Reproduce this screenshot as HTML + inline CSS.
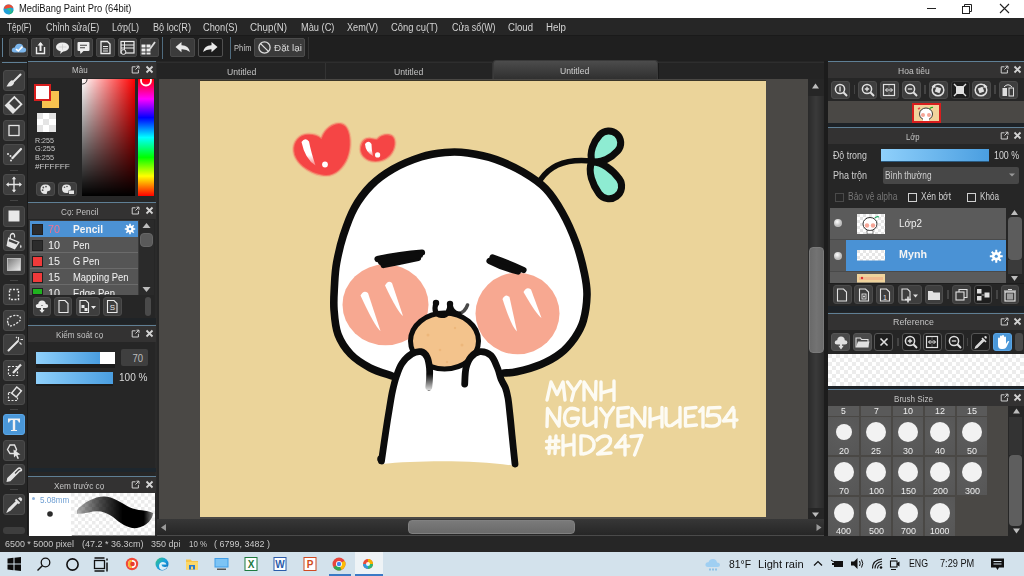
<!DOCTYPE html>
<html><head><meta charset="utf-8"><title>MediBang Paint Pro</title>
<style>
html,body{margin:0;padding:0;width:1024px;height:576px;overflow:hidden;background:#262626;}
body{position:relative;font-family:"Liberation Sans",sans-serif;}
body>div,body>svg{position:absolute;box-sizing:border-box;}
.t{white-space:pre;transform-origin:0 0;}

</style></head><body>
<div style="left:0px;top:0px;width:1024px;height:18px;background:#fff"></div>
<svg style="left:3px;top:4px;" width="11" height="11" viewBox="0 0 11 11"><circle cx="5.5" cy="5.5" r="5" fill="#1f9fd8"/><path d="M0.8 4.5 Q2 0.5 5.5 0.5 Q9.5 0.5 10.5 4.5 Q8 3 5.5 4 Q3 5 0.8 4.5Z" fill="#ef4a32"/><path d="M5.5 10.5 Q10 10 10.5 5.5 Q8.5 8.5 5.5 10.5Z" fill="#21b46a"/><path d="M3.5 5.5 Q5.5 3.5 8 5 Q9 7.5 6.5 9.5 Q9 6.5 3.5 5.5Z" fill="#36c47c"/></svg>
<div class="t" style="left:18.8px;top:4.23px;font-family:'Liberation Sans',sans-serif;font-size:10px;line-height:10px;color:#141414;font-weight:400;transform:scaleX(0.9369);">MediBang Paint Pro (64bit)</div>
<div style="left:927px;top:8px;width:9px;height:1px;background:#222"></div>
<svg style="left:961px;top:3px;" width="12" height="11" viewBox="0 0 12 11"><rect x="1.5" y="3.5" width="7" height="7" fill="none" stroke="#222"/><path d="M3.5 3.5V1.5H10.5V8.5H8.5" fill="none" stroke="#222"/></svg>
<svg style="left:999px;top:3px;" width="11" height="11" viewBox="0 0 11 11"><path d="M1 1L10 10M10 1L1 10" stroke="#222" stroke-width="1.1"/></svg>
<div style="left:0px;top:18px;width:1024px;height:17px;background:#262626"></div>
<div class="t" style="left:7.3px;top:22.54px;font-family:'Liberation Sans',sans-serif;font-size:10px;line-height:10px;color:#d4d4d4;font-weight:400;transform:scaleX(0.8200);">Tệp(F)</div>
<div class="t" style="left:45.7px;top:22.54px;font-family:'Liberation Sans',sans-serif;font-size:10px;line-height:10px;color:#d4d4d4;font-weight:400;transform:scaleX(0.8958);">Chỉnh sửa(E)</div>
<div class="t" style="left:112px;top:22.54px;font-family:'Liberation Sans',sans-serif;font-size:10px;line-height:10px;color:#d4d4d4;font-weight:400;transform:scaleX(0.9028);">Lớp(L)</div>
<div class="t" style="left:152.5px;top:22.54px;font-family:'Liberation Sans',sans-serif;font-size:10px;line-height:10px;color:#d4d4d4;font-weight:400;transform:scaleX(0.9115);">Bộ lọc(R)</div>
<div class="t" style="left:203px;top:22.54px;font-family:'Liberation Sans',sans-serif;font-size:10px;line-height:10px;color:#d4d4d4;font-weight:400;transform:scaleX(0.9262);">Chọn(S)</div>
<div class="t" style="left:250px;top:22.54px;font-family:'Liberation Sans',sans-serif;font-size:10px;line-height:10px;color:#d4d4d4;font-weight:400;transform:scaleX(0.9789);">Chụp(N)</div>
<div class="t" style="left:300.6px;top:22.54px;font-family:'Liberation Sans',sans-serif;font-size:10px;line-height:10px;color:#d4d4d4;font-weight:400;transform:scaleX(0.9246);">Màu (C)</div>
<div class="t" style="left:347px;top:22.54px;font-family:'Liberation Sans',sans-serif;font-size:10px;line-height:10px;color:#d4d4d4;font-weight:400;transform:scaleX(0.9143);">Xem(V)</div>
<div class="t" style="left:391px;top:22.54px;font-family:'Liberation Sans',sans-serif;font-size:10px;line-height:10px;color:#d4d4d4;font-weight:400;transform:scaleX(0.9397);">Công cụ(T)</div>
<div class="t" style="left:451.5px;top:22.54px;font-family:'Liberation Sans',sans-serif;font-size:10px;line-height:10px;color:#d4d4d4;font-weight:400;transform:scaleX(0.8892);">Cửa sổ(W)</div>
<div class="t" style="left:508px;top:22.54px;font-family:'Liberation Sans',sans-serif;font-size:10px;line-height:10px;color:#d4d4d4;font-weight:400;transform:scaleX(0.9564);">Cloud</div>
<div class="t" style="left:546px;top:22.54px;font-family:'Liberation Sans',sans-serif;font-size:10px;line-height:10px;color:#d4d4d4;font-weight:400;transform:scaleX(0.9719);">Help</div>
<div style="left:0px;top:35px;width:1024px;height:1px;background:#1a1a1a"></div>
<div style="left:0px;top:36px;width:1024px;height:25px;background:#1f1f1f"></div>
<div style="left:2px;top:38px;width:1px;height:19px;background:#5f7f95"></div>
<div style="left:9px;top:38px;width:19px;height:19px;background:#3b3b3b;border:1px solid #484848;border-radius:2px;"></div>
<div style="left:31px;top:38px;width:19px;height:19px;background:#3b3b3b;border:1px solid #484848;border-radius:2px;"></div>
<div style="left:53px;top:38px;width:19px;height:19px;background:#3b3b3b;border:1px solid #484848;border-radius:2px;"></div>
<div style="left:74px;top:38px;width:19px;height:19px;background:#3b3b3b;border:1px solid #484848;border-radius:2px;"></div>
<div style="left:96px;top:38px;width:19px;height:19px;background:#3b3b3b;border:1px solid #484848;border-radius:2px;"></div>
<div style="left:118px;top:38px;width:19px;height:19px;background:#3b3b3b;border:1px solid #484848;border-radius:2px;"></div>
<div style="left:140px;top:38px;width:19px;height:19px;background:#3b3b3b;border:1px solid #484848;border-radius:2px;"></div>
<svg style="left:10px;top:39px;" width="18" height="17" viewBox="0 0 18 17"><path d="M4.5 13.5 Q1.5 13.5 1.8 10.8 Q2.2 8.4 4.8 8.6 Q5.6 4.6 9.4 4.8 Q13 5 13.4 8.4 Q16.4 8.6 16.2 11.2 Q16 13.5 13.4 13.5Z" fill="#7cb6ec"/><path d="M6 10.2 L8.3 12 L12.4 7.6" fill="none" stroke="#fff" stroke-width="1.6"/></svg>
<svg style="left:31px;top:39px;" width="19" height="17" viewBox="0 0 19 17"><path d="M5.5 8 V14.5 H13.5 V8" fill="none" stroke="#eee" stroke-width="1.4"/><path d="M9.5 12 V4" stroke="#eee" stroke-width="2"/><path d="M6.5 6.5 L9.5 3 L12.5 6.5Z" fill="#eee"/></svg>
<svg style="left:53px;top:39px;" width="19" height="17" viewBox="0 0 19 17"><ellipse cx="9.5" cy="8" rx="6.5" ry="4.6" fill="#eee"/><path d="M8 11.5 L7 15 L11 11.8Z" fill="#eee"/><path d="M5.5 8h8M9.5 5.2v5.5" stroke="#bbb" stroke-width=".5"/></svg>
<svg style="left:74px;top:39px;" width="19" height="17" viewBox="0 0 19 17"><rect x="3.5" y="3" width="12" height="9" rx="1" fill="#eee"/><path d="M6 12 L6.5 15 L9.5 12Z" fill="#eee"/><path d="M6 6.3h7M6 8.8h5" stroke="#444" stroke-width="1.1"/></svg>
<svg style="left:96px;top:39px;" width="19" height="17" viewBox="0 0 19 17"><path d="M5 2.5 H11.5 L14 5 V14.5 H5Z" fill="none" stroke="#eee" stroke-width="1.3"/><path d="M7 7.5h5M7 9.8h5M7 12h5" stroke="#eee" stroke-width="1"/></svg>
<svg style="left:118px;top:39px;" width="19" height="17" viewBox="0 0 19 17"><rect x="3" y="2.5" width="13" height="11.5" fill="none" stroke="#eee" stroke-width="1.2"/><path d="M3 6h13M3 9h13M6.5 2.5v11.5" stroke="#eee" stroke-width="1"/><circle cx="5.5" cy="13" r="2.4" fill="#3b3b3b" stroke="#eee" stroke-width="1"/></svg>
<svg style="left:139px;top:39px;" width="19" height="17" viewBox="0 0 19 17"><path d="M2.5 5.5h4v3h-4zM7.5 5.5h4v3h-4zM2.5 9.5h4v3h-4zM7.5 9.5h4v3h-4zM2.5 13.5h4v2h-4zM7.5 13.5h4v2h-4z" fill="#eee"/><path d="M11 10 L16 3" stroke="#ddd" stroke-width="1.8"/></svg>
<div style="left:162px;top:37px;width:1px;height:22px;background:#4f6b7e"></div>
<div style="left:170px;top:38px;width:25px;height:19px;background:#3b3b3b;border:1px solid #484848;border-radius:2px;"></div>
<div style="left:198px;top:38px;width:25px;height:19px;background:#1c1c1c;border:1px solid #505050;border-radius:2px;"></div>
<svg style="left:170px;top:38px;" width="25" height="19" viewBox="0 0 25 19"><path d="M5.5 9 L11.5 4 V7.2 Q18.5 7 20 14 Q16.5 11 11.5 11.2 V14.2Z" fill="#e8e8e8"/></svg>
<svg style="left:198px;top:38px;" width="25" height="19" viewBox="0 0 25 19"><path d="M19.5 9 L13.5 4 V7.2 Q6.5 7 5 14 Q8.5 11 13.5 11.2 V14.2Z" fill="#e8e8e8"/></svg>
<div style="left:230px;top:37px;width:1px;height:22px;background:#4f6b7e"></div>
<div style="left:307.5px;top:37px;width:1px;height:22px;background:#333"></div>
<div class="t" style="left:234px;top:43.80px;font-family:'Liberation Sans',sans-serif;font-size:8.5px;line-height:8.5px;color:#c8c8c8;font-weight:400;transform:scaleX(0.8819);">Phím</div>
<div style="left:254px;top:38px;width:51px;height:19px;background:#3b3b3b;border:1px solid #4c4c4c;border-radius:2px;"></div>
<svg style="left:257px;top:40px;" width="15" height="15" viewBox="0 0 15 15"><circle cx="7.5" cy="7.5" r="5.6" fill="none" stroke="#ddd" stroke-width="1.3"/><path d="M3.6 3.6 L11.4 11.4" stroke="#ddd" stroke-width="1.3"/></svg>
<div class="t" style="left:273.5px;top:43.16px;font-family:'Liberation Sans',sans-serif;font-size:9.5px;line-height:9.5px;color:#d8d8d8;font-weight:400;transform:scaleX(1.0394);">Đặt lại</div>
<div style="left:0px;top:61px;width:28px;height:490px;background:#262626"></div>
<div style="left:27px;top:61px;width:1px;height:474px;background:#1a1a1a"></div>
<div style="left:2px;top:62px;width:25px;height:1px;background:#5f7f95"></div>
<div style="left:3px;top:70px;width:22px;height:21px;background:#3e3e3e;border:1px solid #4b4b4b;border-radius:3px"></div>
<div style="left:3px;top:94px;width:22px;height:21px;background:#3e3e3e;border:1px solid #4b4b4b;border-radius:3px"></div>
<div style="left:3px;top:120px;width:22px;height:21px;background:#3e3e3e;border:1px solid #4b4b4b;border-radius:3px"></div>
<div style="left:3px;top:144px;width:22px;height:21px;background:#3e3e3e;border:1px solid #4b4b4b;border-radius:3px"></div>
<div style="left:3px;top:174px;width:22px;height:21px;background:#3e3e3e;border:1px solid #4b4b4b;border-radius:3px"></div>
<div style="left:3px;top:206px;width:22px;height:21px;background:#3e3e3e;border:1px solid #4b4b4b;border-radius:3px"></div>
<div style="left:3px;top:230px;width:22px;height:21px;background:#3e3e3e;border:1px solid #4b4b4b;border-radius:3px"></div>
<div style="left:3px;top:254px;width:22px;height:21px;background:#3e3e3e;border:1px solid #4b4b4b;border-radius:3px"></div>
<div style="left:3px;top:284px;width:22px;height:21px;background:#3e3e3e;border:1px solid #4b4b4b;border-radius:3px"></div>
<div style="left:3px;top:310px;width:22px;height:21px;background:#3e3e3e;border:1px solid #4b4b4b;border-radius:3px"></div>
<div style="left:3px;top:334px;width:22px;height:21px;background:#3e3e3e;border:1px solid #4b4b4b;border-radius:3px"></div>
<div style="left:3px;top:360px;width:22px;height:21px;background:#3e3e3e;border:1px solid #4b4b4b;border-radius:3px"></div>
<div style="left:3px;top:384px;width:22px;height:21px;background:#3e3e3e;border:1px solid #4b4b4b;border-radius:3px"></div>
<div style="left:3px;top:414px;width:22px;height:21px;background:#4a97d8;border:1px solid #5aa5e5;border-radius:3px"></div>
<div style="left:3px;top:440px;width:22px;height:21px;background:#3e3e3e;border:1px solid #4b4b4b;border-radius:3px"></div>
<div style="left:3px;top:464px;width:22px;height:21px;background:#3e3e3e;border:1px solid #4b4b4b;border-radius:3px"></div>
<div style="left:3px;top:494px;width:22px;height:21px;background:#3e3e3e;border:1px solid #4b4b4b;border-radius:3px"></div>
<div style="left:10px;top:170px;width:8px;height:1px;background:#444"></div>
<div style="left:10px;top:200px;width:8px;height:1px;background:#444"></div>
<div style="left:10px;top:280px;width:8px;height:1px;background:#444"></div>
<div style="left:10px;top:409px;width:8px;height:1px;background:#444"></div>
<div style="left:10px;top:489px;width:8px;height:1px;background:#444"></div>
<div style="left:3px;top:527px;width:22px;height:7px;background:#3e3e3e;border-radius:3px"></div>
<svg style="left:3px;top:70px;" width="22" height="21" viewBox="0 0 22 21"><path d="M17.5 4.5 L10 12" stroke="#e4e4e4" stroke-width="2" stroke-linecap="round"/><path d="M10.5 11.2 Q9 9.5 7.5 11 Q5 13 3.5 16.5 Q8 17 10 15 Q12 13 10.5 11.2Z" fill="#e4e4e4"/></svg>
<svg style="left:3px;top:94px;" width="22" height="21" viewBox="0 0 22 21"><g transform="rotate(45 11 10.5)"><rect x="6" y="5" width="10" height="12" fill="none" stroke="#e4e4e4" stroke-width="1.8"/><rect x="6" y="13" width="10" height="4" fill="#e4e4e4"/></g></svg>
<svg style="left:3px;top:120px;" width="22" height="21" viewBox="0 0 22 21"><rect x="6" y="5.5" width="10" height="10" fill="none" stroke="#e4e4e4" stroke-width="1.3"/></svg>
<svg style="left:3px;top:144px;" width="22" height="21" viewBox="0 0 22 21"><path d="M18 5 L10.5 13" stroke="#e4e4e4" stroke-width="2.2" stroke-linecap="round"/><circle cx="9.5" cy="14" r="1.2" fill="#e4e4e4"/><circle cx="7.5" cy="12" r="1" fill="#e4e4e4"/><circle cx="5" cy="10" r="1" fill="#e4e4e4"/><circle cx="8" cy="16.5" r="1" fill="#e4e4e4"/></svg>
<svg style="left:3px;top:174px;" width="22" height="21" viewBox="0 0 22 21"><path d="M11 3.5V17.5M4 10.5H18" stroke="#e4e4e4" stroke-width="1.4"/><path d="M11 2.5L8.8 5.3H13.2ZM11 18.5L8.8 15.7H13.2ZM3 10.5L5.8 8.3V12.7ZM19 10.5L16.2 8.3V12.7Z" fill="#e4e4e4"/></svg>
<svg style="left:3px;top:206px;" width="22" height="21" viewBox="0 0 22 21"><rect x="5.5" y="4.5" width="11" height="11" fill="#e8e8e8"/></svg>
<svg style="left:3px;top:230px;" width="22" height="21" viewBox="0 0 22 21"><g transform="rotate(22 10 12)"><path d="M4.5 10 H15.5 L14 17.5 H6Z" fill="none" stroke="#e4e4e4" stroke-width="1.3"/><path d="M4.9 13 H15.1 L14 17.5 H6Z" fill="#e4e4e4"/></g><path d="M7.5 9 Q6.5 4 9.5 3.5 Q12 3.5 11.5 7.5" fill="none" stroke="#e4e4e4" stroke-width="1.3"/><path d="M17.8 14.5 Q16.2 17 17.8 18 Q19.4 17 17.8 14.5Z" fill="#e4e4e4"/></svg>
<svg style="left:3px;top:254px;" width="22" height="21" viewBox="0 0 22 21"><defs><linearGradient id="gr1" x1="0" y1="0" x2="1" y2="1"><stop offset="0" stop-color="#777"/><stop offset="1" stop-color="#eee"/></linearGradient></defs><rect x="4.5" y="4.5" width="13" height="12" fill="url(#gr1)" stroke="#ccc" stroke-width=".8"/></svg>
<svg style="left:3px;top:284px;" width="22" height="21" viewBox="0 0 22 21"><rect x="6.5" y="5.5" width="9" height="10" fill="none" stroke="#e4e4e4" stroke-width="1.4" stroke-dasharray="2 1.5"/></svg>
<svg style="left:3px;top:310px;" width="22" height="21" viewBox="0 0 22 21"><path d="M5 13 Q3 8 9 6 Q15 4.5 17 7 Q19 10 14 13 Q10 16 7 16 Q5.5 15.5 5 13Z" fill="none" stroke="#e4e4e4" stroke-width="1.3" stroke-dasharray="2 1.4"/></svg>
<svg style="left:3px;top:334px;" width="22" height="21" viewBox="0 0 22 21"><path d="M15 7 L5.5 16.5" stroke="#e4e4e4" stroke-width="2" stroke-linecap="round"/><path d="M15.5 3V6M17.5 5.5H20M16.5 8.5L18.5 10.5M14 4 L13 3" stroke="#e4e4e4" stroke-width="1.1"/></svg>
<svg style="left:3px;top:360px;" width="22" height="21" viewBox="0 0 22 21"><rect x="5.5" y="6.5" width="9" height="9" fill="none" stroke="#e4e4e4" stroke-width="1.2" stroke-dasharray="2 1.5"/><path d="M18 4.5 L10 13" stroke="#e4e4e4" stroke-width="2.2"/></svg>
<svg style="left:3px;top:384px;" width="22" height="21" viewBox="0 0 22 21"><rect x="5.5" y="8.5" width="9" height="8" fill="none" stroke="#e4e4e4" stroke-width="1.2" stroke-dasharray="2 1.5"/><g transform="rotate(40 13.5 8)"><rect x="10.5" y="4" width="6" height="8" fill="#3e3e3e" stroke="#e4e4e4" stroke-width="1.5"/></g></svg>
<svg style="left:3px;top:414px;" width="22" height="21" viewBox="0 0 22 21"><path d="M5 4.5H17V8.5H15.8Q15.5 6 13.5 6H12.2V16H14V17H8V16H9.8V6H8.5Q6.5 6 6.2 8.5H5Z" fill="#f2f2f2"/></svg>
<svg style="left:3px;top:440px;" width="22" height="21" viewBox="0 0 22 21"><path d="M4.5 9.5 L7 5 L11.5 5 L13.5 9.5 L11.5 13.5 L7 13.5Z" fill="none" stroke="#e4e4e4" stroke-width="1.4"/><path d="M10.5 9.5 L17.5 14.5 L14.5 15 L16 18.5 L14.5 19 L13 15.5 L11 17.5Z" fill="#e4e4e4"/></svg>
<svg style="left:3px;top:464px;" width="22" height="21" viewBox="0 0 22 21"><path d="M18 5 Q16.5 3 14.5 5 L5 14.5 L4.5 17 L7 16.5 L16.5 7 Q19.5 6.5 18 5Z" fill="none" stroke="#e4e4e4" stroke-width="1.6"/><path d="M5 14.5 L11 8.5 L13 10.5 L7 16.5 L4.5 17Z" fill="#e4e4e4"/></svg>
<svg style="left:3px;top:494px;" width="22" height="21" viewBox="0 0 22 21"><path d="M14 7 L6 15 L5 17 L7 16 L15 8" fill="none" stroke="#e4e4e4" stroke-width="1.7"/><path d="M12.5 5.5 L16.5 9.5" stroke="#e4e4e4" stroke-width="2"/><path d="M15 4.5 Q17 2.5 18.5 4 Q20 5.5 18 7.5Z" fill="#e4e4e4"/></svg>
<div style="left:28px;top:61px;width:129px;height:474px;background:#262626"></div>
<div style="left:155px;top:61px;width:3.5px;height:474px;background:#2a2a2a"></div>
<div style="left:157px;top:61px;width:1.5px;height:474px;background:#1e1e1e"></div>
<div style="left:28px;top:61px;width:128px;height:1px;background:#5f7f95"></div>
<div style="left:28px;top:62px;width:128px;height:16px;background:#333232"></div>
<svg style="left:131px;top:65px;" width="9" height="9" viewBox="0 0 9 9"><path d="M5.5 1.2 H8 V3.8" fill="none" stroke="#cfcfcf" stroke-width="1"/><path d="M8 1 L4.5 4.5" stroke="#cfcfcf" stroke-width="1"/><path d="M4.5 1.8 H1.2 V8 H7.4 V4.8" fill="none" stroke="#cfcfcf" stroke-width="1"/></svg>
<svg style="left:144.5px;top:65px;" width="9" height="9" viewBox="0 0 9 9"><path d="M1.5 1.5 L7.5 7.5 M7.5 1.5 L1.5 7.5" stroke="#d4d4d4" stroke-width="1.8"/></svg>
<div class="t" style="left:71.8px;top:65.36px;font-family:'Liberation Sans',sans-serif;font-size:9.5px;line-height:9.5px;color:#c4c4c4;font-weight:400;transform:scaleX(0.8440);">Màu</div>
<div style="left:42px;top:91px;width:17px;height:17px;background:#f7c24f"></div>
<div style="left:34px;top:84px;width:17px;height:17px;background:#fff;border:2px solid #d81e1e"></div>
<svg style="left:37px;top:113px;" width="19" height="19" viewBox="0 0 19 19"><rect width="19" height="19" fill="#fff"/><rect x="0" y="0" width="6" height="6" fill="#e4e4e4"/><rect x="12" y="0" width="7" height="6" fill="#e4e4e4"/><rect x="6" y="6" width="6" height="6" fill="#e4e4e4"/><rect x="0" y="12" width="6" height="7" fill="#e4e4e4"/><rect x="12" y="12" width="7" height="7" fill="#e4e4e4"/></svg>
<div class="t" style="left:34.7px;top:136.71px;font-family:'Liberation Sans',sans-serif;font-size:7.2px;line-height:7.2px;color:#c9c9c9;font-weight:400;transform:scaleX(0.9902);">R:255</div>
<div class="t" style="left:34.7px;top:145.31px;font-family:'Liberation Sans',sans-serif;font-size:7.2px;line-height:7.2px;color:#c9c9c9;font-weight:400;transform:scaleX(1.0207);">G:255</div>
<div class="t" style="left:34.7px;top:153.91px;font-family:'Liberation Sans',sans-serif;font-size:7.2px;line-height:7.2px;color:#c9c9c9;font-weight:400;transform:scaleX(1.0108);">B:255</div>
<div class="t" style="left:34.7px;top:162.51px;font-family:'Liberation Sans',sans-serif;font-size:7.2px;line-height:7.2px;color:#c9c9c9;font-weight:400;transform:scaleX(1.1436);">#FFFFFF</div>
<div style="left:82px;top:78.5px;width:53px;height:117.5px;background:linear-gradient(to bottom, rgba(0,0,0,0), #000), linear-gradient(to right, #fff, #f00)"></div>
<svg style="left:82px;top:78.5px;" width="8" height="8" viewBox="0 0 8 8"><circle cx="0.5" cy="0.5" r="4.5" fill="none" stroke="#333" stroke-width="1"/></svg>
<div style="left:137.5px;top:78.5px;width:16px;height:117.5px;background:linear-gradient(to bottom,#f00 0%,#f0f 17%,#00f 33%,#0ff 50%,#0f0 67%,#ff0 83%,#f00 100%)"></div>
<svg style="left:137.5px;top:78.5px;" width="16" height="9" viewBox="0 0 16 9"><circle cx="8" cy="1.5" r="5" fill="none" stroke="#fff" stroke-width="1.8"/></svg>
<div style="left:36px;top:182px;width:19px;height:14px;background:#3e3e3e;border:1px solid #4b4b4b;border-radius:3px"></div>
<div style="left:57.5px;top:182px;width:19px;height:14px;background:#3e3e3e;border:1px solid #4b4b4b;border-radius:3px"></div>
<svg style="left:36px;top:182px;" width="19" height="14" viewBox="0 0 19 14"><path d="M9.5 2.5 Q14.5 2.5 14.5 7 Q14.5 9 12.5 9 Q10.5 9 11 10.5 Q11.5 12 9.5 12 Q4.5 12 4.5 7.2 Q4.5 2.5 9.5 2.5Z" fill="#e6e6e6"/><circle cx="7.3" cy="5.5" r=".9" fill="#555"/><circle cx="10" cy="4.6" r=".9" fill="#555"/><circle cx="6.6" cy="8.2" r=".9" fill="#555"/></svg>
<svg style="left:57.5px;top:182px;" width="19" height="14" viewBox="0 0 19 14"><path d="M8.5 2.5 Q13 2.5 13 6.5 Q13 8 11.5 8 Q10 8 10.5 9.5 Q11 11 8.5 11 Q4 11 4 6.8 Q4 2.5 8.5 2.5Z" fill="#e6e6e6"/><circle cx="6.5" cy="5.3" r=".8" fill="#555"/><circle cx="9" cy="4.5" r=".8" fill="#555"/><rect x="11" y="8.5" width="5" height="3.5" fill="#e6e6e6"/></svg>
<div style="left:28px;top:202px;width:128px;height:1px;background:#5f7f95"></div>
<div style="left:28px;top:203px;width:128px;height:16px;background:#333232"></div>
<svg style="left:131px;top:206px;" width="9" height="9" viewBox="0 0 9 9"><path d="M5.5 1.2 H8 V3.8" fill="none" stroke="#cfcfcf" stroke-width="1"/><path d="M8 1 L4.5 4.5" stroke="#cfcfcf" stroke-width="1"/><path d="M4.5 1.8 H1.2 V8 H7.4 V4.8" fill="none" stroke="#cfcfcf" stroke-width="1"/></svg>
<svg style="left:144.5px;top:206px;" width="9" height="9" viewBox="0 0 9 9"><path d="M1.5 1.5 L7.5 7.5 M7.5 1.5 L1.5 7.5" stroke="#d4d4d4" stroke-width="1.8"/></svg>
<div class="t" style="left:60.6px;top:206.96px;font-family:'Liberation Sans',sans-serif;font-size:9.5px;line-height:9.5px;color:#c4c4c4;font-weight:400;transform:scaleX(0.8635);">Cọ: Pencil</div>
<div style="left:29px;top:220px;width:110px;height:75px;background:#3a3a3a"></div>
<div style="left:30px;top:221px;width:108px;height:16.5px;background:#4c92d4"></div>
<div style="left:32px;top:223.5px;width:11px;height:11px;background:#2c2c2c;border:1px solid #202020"></div>
<div class="t" style="left:47.5px;top:224.84px;font-family:'Liberation Sans',sans-serif;font-size:10px;line-height:10px;color:#f2708f;font-weight:400;transform:scaleX(1.0787);">70</div>
<div class="t" style="left:72.7px;top:224.84px;font-family:'Liberation Sans',sans-serif;font-size:10px;line-height:10px;color:#f4f4f4;font-weight:700;transform:scaleX(1.0180);">Pencil</div>
<div style="left:30px;top:237px;width:108px;height:16px;background:#555555"></div>
<div style="left:30px;top:252px;width:108px;height:1px;background:#6b6b6b"></div>
<div style="left:32px;top:239.5px;width:11px;height:11px;background:#2c2c2c;border:1px solid #202020"></div>
<div class="t" style="left:47.5px;top:240.84px;font-family:'Liberation Sans',sans-serif;font-size:10px;line-height:10px;color:#f2f2f2;font-weight:400;transform:scaleX(1.0787);">10</div>
<div class="t" style="left:72.7px;top:240.84px;font-family:'Liberation Sans',sans-serif;font-size:10px;line-height:10px;color:#f4f4f4;font-weight:400;transform:scaleX(0.9327);">Pen</div>
<div style="left:30px;top:253px;width:108px;height:16px;background:#555555"></div>
<div style="left:30px;top:268px;width:108px;height:1px;background:#6b6b6b"></div>
<div style="left:32px;top:255.5px;width:11px;height:11px;background:#f03a3a;border:1px solid #202020"></div>
<div class="t" style="left:47.5px;top:256.84px;font-family:'Liberation Sans',sans-serif;font-size:10px;line-height:10px;color:#f2f2f2;font-weight:400;transform:scaleX(1.0787);">15</div>
<div class="t" style="left:72.7px;top:256.84px;font-family:'Liberation Sans',sans-serif;font-size:10px;line-height:10px;color:#f4f4f4;font-weight:400;transform:scaleX(0.9309);">G Pen</div>
<div style="left:30px;top:269px;width:108px;height:16px;background:#555555"></div>
<div style="left:30px;top:284px;width:108px;height:1px;background:#6b6b6b"></div>
<div style="left:32px;top:271.5px;width:11px;height:11px;background:#f03a3a;border:1px solid #202020"></div>
<div class="t" style="left:47.5px;top:272.84px;font-family:'Liberation Sans',sans-serif;font-size:10px;line-height:10px;color:#f2f2f2;font-weight:400;transform:scaleX(1.0787);">15</div>
<div class="t" style="left:72.7px;top:272.84px;font-family:'Liberation Sans',sans-serif;font-size:10px;line-height:10px;color:#f4f4f4;font-weight:400;transform:scaleX(0.9417);">Mapping Pen</div>
<div style="left:30px;top:285px;width:108px;height:9.699999999999989px;background:#555555"></div>
<div style="left:32px;top:287.5px;width:11px;height:7.199999999999989px;background:#1fb31f;border:1px solid #202020"></div>
<div class="t" style="left:47.5px;top:288.84px;font-family:'Liberation Sans',sans-serif;font-size:10px;line-height:10px;color:#f2f2f2;font-weight:400;transform:scaleX(1.0787);">10</div>
<div class="t" style="left:72.7px;top:288.84px;font-family:'Liberation Sans',sans-serif;font-size:10px;line-height:10px;color:#f4f4f4;font-weight:400;transform:scaleX(0.9559);">Edge Pen</div>
<div style="left:29px;top:294.7px;width:110px;height:2px;background:#262626"></div>
<svg style="left:124px;top:223px;" width="12" height="12" viewBox="0 0 12 12"><g fill="#fff"><circle cx="6" cy="6" r="3.6"/><g stroke="#fff" stroke-width="1.6"><path d="M6 0.8V11.2M0.8 6H11.2M2.3 2.3L9.7 9.7M9.7 2.3L2.3 9.7"/></g></g><circle cx="6" cy="6" r="1.3" fill="#4c92d4"/></svg>
<div style="left:139px;top:220px;width:15px;height:75px;background:#2a2a2a"></div>
<svg style="left:139px;top:221px;" width="15" height="8" viewBox="0 0 15 8"><path d="M7.5 2 L11.5 7 H3.5Z" fill="#bdbdbd"/></svg>
<div style="left:140px;top:233px;width:13px;height:13.5px;background:#5a5a5a;border:1px solid #666;border-radius:4px"></div>
<svg style="left:139px;top:286px;" width="15" height="8" viewBox="0 0 15 8"><path d="M7.5 6 L11.5 1 H3.5Z" fill="#bdbdbd"/></svg>
<div style="left:33px;top:297px;width:18px;height:19px;background:#3e3e3e;border:1px solid #4b4b4b;border-radius:3px"></div>
<div style="left:54px;top:297px;width:18px;height:19px;background:#3e3e3e;border:1px solid #4b4b4b;border-radius:3px"></div>
<div style="left:76px;top:297px;width:24px;height:19px;background:#3e3e3e;border:1px solid #4b4b4b;border-radius:3px"></div>
<div style="left:103px;top:297px;width:19px;height:19px;background:#3e3e3e;border:1px solid #4b4b4b;border-radius:3px"></div>
<svg style="left:33px;top:297px;" width="18" height="19" viewBox="0 0 18 19"><path d="M4.5 11 Q2.5 11 2.8 8.6 Q3.2 6.8 5.2 7 Q5.6 3.5 9 3.5 Q12.5 3.6 12.8 7 Q15.2 7 15.2 9 Q15.2 11 13 11Z" fill="#eaeaea"/><path d="M9 8 V15" stroke="#3e3e3e" stroke-width="1"/><path d="M9 9 V14.5" stroke="#eaeaea" stroke-width="2"/><path d="M6.3 12.8 L9 16 L11.7 12.8Z" fill="#eaeaea"/></svg>
<svg style="left:54px;top:297px;" width="19" height="19" viewBox="0 0 19 19"><path d="M5 3.5 H11 L14 6.5 V15.5 H5Z" fill="none" stroke="#eaeaea" stroke-width="1.1"/></svg>
<svg style="left:76px;top:297px;" width="24" height="19" viewBox="0 0 24 19"><path d="M4 3.5 H10 L12.5 6 V15.5 H4Z" fill="none" stroke="#eaeaea" stroke-width="1.1"/><rect x="5.5" y="8" width="3" height="3" fill="#eaeaea"/><rect x="8.5" y="11" width="3" height="3" fill="#eaeaea"/><path d="M15 9 L20 9 L17.5 12Z" fill="#eaeaea"/></svg>
<svg style="left:103px;top:297px;" width="19" height="19" viewBox="0 0 19 19"><path d="M4.5 3.5 H11 L14 6.5 V15.5 H4.5Z" fill="none" stroke="#eaeaea" stroke-width="1.1"/><text x="9.3" y="13.3" font-size="8" font-family="Liberation Sans" fill="#eaeaea" text-anchor="middle">S</text></svg>
<div style="left:145px;top:297px;width:6px;height:19px;background:#4a4a4a;border-radius:3px"></div>
<div style="left:29px;top:318px;width:127px;height:6px;background:#1f2326"></div>
<div style="left:28px;top:325px;width:128px;height:1px;background:#5f7f95"></div>
<div style="left:28px;top:326px;width:128px;height:16px;background:#333232"></div>
<svg style="left:131px;top:329px;" width="9" height="9" viewBox="0 0 9 9"><path d="M5.5 1.2 H8 V3.8" fill="none" stroke="#cfcfcf" stroke-width="1"/><path d="M8 1 L4.5 4.5" stroke="#cfcfcf" stroke-width="1"/><path d="M4.5 1.8 H1.2 V8 H7.4 V4.8" fill="none" stroke="#cfcfcf" stroke-width="1"/></svg>
<svg style="left:144.5px;top:329px;" width="9" height="9" viewBox="0 0 9 9"><path d="M1.5 1.5 L7.5 7.5 M7.5 1.5 L1.5 7.5" stroke="#d4d4d4" stroke-width="1.8"/></svg>
<div class="t" style="left:55.8px;top:329.76px;font-family:'Liberation Sans',sans-serif;font-size:9.5px;line-height:9.5px;color:#c4c4c4;font-weight:400;transform:scaleX(0.8594);">Kiểm soát cọ</div>
<div style="left:35.5px;top:351.5px;width:79.5px;height:12px;background:#fff"></div>
<div style="left:35.5px;top:351.5px;width:64px;height:12px;background:linear-gradient(to right,#8fd0fb,#4a9ee0)"></div>
<div style="left:35.5px;top:363.5px;width:79.5px;height:4px;background:#1b1b1b"></div>
<div style="left:120.5px;top:349px;width:27px;height:17px;background:#3f3f3f;border-radius:2px"></div>
<div class="t" style="left:142.8px;top:353.54px;font-family:'Liberation Sans',sans-serif;font-size:10px;line-height:10px;color:#bdbdbd;font-weight:400;transform:translateX(-100%) scaleX(.95);transform-origin:100% 0;">70</div>
<div style="left:35.5px;top:371.5px;width:77.5px;height:12px;background:linear-gradient(to right,#8fd0fb,#4a9ee0)"></div>
<div style="left:35.5px;top:383.5px;width:77.5px;height:2px;background:#1b1b1b"></div>
<div class="t" style="left:119px;top:372.74px;font-family:'Liberation Sans',sans-serif;font-size:10px;line-height:10px;color:#d8d8d8;font-weight:400;transform:scaleX(1.0050);">100 %</div>
<div style="left:29px;top:468px;width:127px;height:4px;background:#1d262d"></div>
<div style="left:28px;top:476px;width:128px;height:1px;background:#5f7f95"></div>
<div style="left:28px;top:477px;width:128px;height:16px;background:#333232"></div>
<svg style="left:131px;top:480px;" width="9" height="9" viewBox="0 0 9 9"><path d="M5.5 1.2 H8 V3.8" fill="none" stroke="#cfcfcf" stroke-width="1"/><path d="M8 1 L4.5 4.5" stroke="#cfcfcf" stroke-width="1"/><path d="M4.5 1.8 H1.2 V8 H7.4 V4.8" fill="none" stroke="#cfcfcf" stroke-width="1"/></svg>
<svg style="left:144.5px;top:480px;" width="9" height="9" viewBox="0 0 9 9"><path d="M1.5 1.5 L7.5 7.5 M7.5 1.5 L1.5 7.5" stroke="#d4d4d4" stroke-width="1.8"/></svg>
<div class="t" style="left:53.7px;top:480.76px;font-family:'Liberation Sans',sans-serif;font-size:9.5px;line-height:9.5px;color:#c4c4c4;font-weight:400;transform:scaleX(0.8672);">Xem trước cọ</div>
<div style="left:29px;top:493px;width:41.5px;height:42.5px;background:#fff"></div>
<div style="left:70.5px;top:493px;width:1px;height:42.5px;background:#ddd"></div>
<svg style="left:71px;top:493px;" width="84" height="42.5" viewBox="0 0 84 42.5"><defs><pattern id="chk" width="7" height="7" patternUnits="userSpaceOnUse"><rect width="7" height="7" fill="#fff"/><rect width="3.5" height="3.5" fill="#ebebeb"/><rect x="3.5" y="3.5" width="3.5" height="3.5" fill="#ebebeb"/></pattern><linearGradient id="stk" x1="0" x2="1"><stop offset="0" stop-color="#000" stop-opacity=".3"/><stop offset=".3" stop-color="#000" stop-opacity=".7"/><stop offset=".6" stop-color="#000"/><stop offset=".88" stop-color="#000"/><stop offset="1" stop-color="#000" stop-opacity=".5"/></linearGradient><filter id="bl" x="-10%" y="-30%" width="120%" height="160%"><feGaussianBlur stdDeviation="0.7"/></filter></defs><rect width="84" height="42.5" fill="url(#chk)"/><path d="M6,17 C12,10 24,3.5 33,3.6 C42,3.7 50,10 59,14.6 C66,18 76,17 82,20 C82,26 76,33 66,35 C58,36 50,31 42,24 C34,18 26,17 18,19.4 C12,20.5 8,21 6,20.7Z" fill="url(#stk)" filter="url(#bl)"/></svg>
<div class="t" style="left:39.8px;top:494.56px;font-family:'Liberation Sans',sans-serif;font-size:9.5px;line-height:9.5px;color:#6f9fd3;font-weight:400;transform:scaleX(0.8506);">5.08mm</div>
<svg style="left:31px;top:496px;" width="5" height="5" viewBox="0 0 5 5"><circle cx="2.5" cy="2.5" r="1.5" fill="#8fb3dc"/></svg>
<svg style="left:46px;top:510px;" width="8" height="8" viewBox="0 0 8 8"><circle cx="4" cy="4" r="2.8" fill="#2a2a2a"/></svg>
<div style="left:157px;top:61px;width:667px;height:474px;background:#262626"></div>
<div style="left:157px;top:62px;width:667px;height:17px;background:#242424;border-top:1px solid #2e2e2e"></div>
<div style="left:325px;top:63px;width:1px;height:16px;background:#333"></div>
<div style="left:491.5px;top:63px;width:1px;height:16px;background:#333"></div>
<div style="left:492.5px;top:60px;width:165.5px;height:19.5px;background:linear-gradient(to bottom,#4c4c4c,#2e2e2e);border-radius:3px 3px 0 0;border:1px solid #3a3a3a;border-bottom:none"></div>
<div style="left:658px;top:63px;width:1px;height:16px;background:#1a1a1a"></div>
<div class="t" style="left:226.7px;top:66.76px;font-family:'Liberation Sans',sans-serif;font-size:9.5px;line-height:9.5px;color:#c4c4c4;font-weight:400;transform:scaleX(0.9094);">Untitled</div>
<div class="t" style="left:393.5px;top:66.76px;font-family:'Liberation Sans',sans-serif;font-size:9.5px;line-height:9.5px;color:#c4c4c4;font-weight:400;transform:scaleX(0.9094);">Untitled</div>
<div class="t" style="left:559.7px;top:65.76px;font-family:'Liberation Sans',sans-serif;font-size:9.5px;line-height:9.5px;color:#cfcfcf;font-weight:400;transform:scaleX(0.9094);">Untitled</div>
<div style="left:158.5px;top:79px;width:649.5px;height:440px;background:#4a4845"></div>
<div style="left:808px;top:79.5px;width:15.5px;height:439.5px;background:linear-gradient(to right,#2a2a2a,#3a3a3a 50%,#2a2a2a)"></div>
<div style="left:808px;top:79.5px;width:15.5px;height:16px;background:#262626"></div>
<svg style="left:808px;top:80px;" width="15" height="12" viewBox="0 0 15 12"><path d="M7.5 3.5 L11 8.5 H4Z" fill="#bdbdbd"/></svg>
<div style="left:808px;top:508px;width:15.5px;height:11px;background:#262626"></div>
<svg style="left:808px;top:509px;" width="15" height="10" viewBox="0 0 15 10"><path d="M7.5 8 L11 3.5 H4Z" fill="#bdbdbd"/></svg>
<div style="left:809px;top:247px;width:14.5px;height:105.5px;background:linear-gradient(to right,#6a6a6a,#737373 50%,#6a6a6a);border-radius:4px;border:1px solid #7a7a7a"></div>
<div style="left:823.5px;top:61px;width:4.5px;height:490px;background:#1c1c1c"></div>
<div style="left:157px;top:519px;width:666.5px;height:16px;background:linear-gradient(to bottom,#373737,#262626)"></div>
<div style="left:157px;top:535px;width:666.5px;height:1.2px;background:#4a4a4a"></div>
<svg style="left:158px;top:520px;" width="12" height="15" viewBox="0 0 12 15"><path d="M3 7.5 L8 4 V11Z" fill="#9a9a9a"/></svg>
<svg style="left:812px;top:520px;" width="12" height="15" viewBox="0 0 12 15"><path d="M9.5 7.5 L4.5 4 V11Z" fill="#9a9a9a"/></svg>
<div style="left:408px;top:519.5px;width:166.5px;height:14.5px;background:linear-gradient(to bottom,#7a7a7a,#6a6a6a);border-radius:4px;border:1px solid #808080"></div>
<div style="left:200px;top:79.5px;width:566px;height:1.3px;background:#3b3628"></div>
<div style="left:200px;top:80.8px;width:566px;height:436.2px;background:#ebd49a"></div>
<div style="left:828px;top:61px;width:196px;height:474px;background:#262626"></div>
<div style="left:828px;top:61px;width:196px;height:1px;background:#5f7f95"></div>
<div style="left:828px;top:62px;width:196px;height:16px;background:#333232"></div>
<svg style="left:999.5px;top:65px;" width="9" height="9" viewBox="0 0 9 9"><path d="M5.5 1.2 H8 V3.8" fill="none" stroke="#cfcfcf" stroke-width="1"/><path d="M8 1 L4.5 4.5" stroke="#cfcfcf" stroke-width="1"/><path d="M4.5 1.8 H1.2 V8 H7.4 V4.8" fill="none" stroke="#cfcfcf" stroke-width="1"/></svg>
<svg style="left:1012.5px;top:65px;" width="9" height="9" viewBox="0 0 9 9"><path d="M1.5 1.5 L7.5 7.5 M7.5 1.5 L1.5 7.5" stroke="#d4d4d4" stroke-width="1.8"/></svg>
<div class="t" style="left:897.8px;top:65.96px;font-family:'Liberation Sans',sans-serif;font-size:9.5px;line-height:9.5px;color:#c4c4c4;font-weight:400;transform:scaleX(0.8957);">Hoa tiêu</div>
<div style="left:828px;top:78px;width:196px;height:23px;background:#262626"></div>
<div style="left:831px;top:81px;width:18.5px;height:18px;background:#3e3e3e;border:1px solid #4b4b4b;border-radius:3px"></div>
<div style="left:858px;top:81px;width:18.5px;height:18px;background:#3e3e3e;border:1px solid #4b4b4b;border-radius:3px"></div>
<div style="left:880px;top:81px;width:18.5px;height:18px;background:#3e3e3e;border:1px solid #4b4b4b;border-radius:3px"></div>
<div style="left:902px;top:81px;width:18.5px;height:18px;background:#3e3e3e;border:1px solid #4b4b4b;border-radius:3px"></div>
<div style="left:929px;top:81px;width:18.5px;height:18px;background:#3e3e3e;border:1px solid #4b4b4b;border-radius:3px"></div>
<div style="left:951px;top:81px;width:18.5px;height:18px;background:#1e1e1e;border:1px solid #3a3a3a;border-radius:3px"></div>
<div style="left:972px;top:81px;width:18.5px;height:18px;background:#3e3e3e;border:1px solid #4b4b4b;border-radius:3px"></div>
<div style="left:999px;top:81px;width:18.5px;height:18px;background:#3e3e3e;border:1px solid #4b4b4b;border-radius:3px"></div>
<div style="left:853.5px;top:85px;width:1.5px;height:9px;background:#444"></div>
<div style="left:924px;top:85px;width:1.5px;height:9px;background:#444"></div>
<div style="left:994px;top:85px;width:1.5px;height:9px;background:#444"></div>
<svg style="left:832px;top:81px;" width="18" height="18" viewBox="0 0 18 18"><circle cx="8" cy="8" r="4.6" fill="none" stroke="#e0e0e0" stroke-width="1.5"/><path d="M11.3 11.3 L15 15" stroke="#e0e0e0" stroke-width="2"/><path d="M8 5.6v4.8" stroke="#e0e0e0" stroke-width="1.4"/></svg>
<svg style="left:859px;top:81px;" width="18" height="18" viewBox="0 0 18 18"><circle cx="8" cy="8" r="4.6" fill="none" stroke="#e0e0e0" stroke-width="1.5"/><path d="M11.3 11.3 L15 15" stroke="#e0e0e0" stroke-width="2"/><path d="M5.8 8h4.4M8 5.8v4.4" stroke="#e0e0e0" stroke-width="1.3"/></svg>
<svg style="left:902px;top:81px;" width="18" height="18" viewBox="0 0 18 18"><circle cx="8" cy="8" r="4.6" fill="none" stroke="#e0e0e0" stroke-width="1.5"/><path d="M11.3 11.3 L15 15" stroke="#e0e0e0" stroke-width="2"/><path d="M5.8 8h4.4" stroke="#e0e0e0" stroke-width="1.3"/></svg>
<svg style="left:880px;top:81px;" width="18" height="18" viewBox="0 0 18 18"><rect x="3.5" y="3.5" width="11" height="11" fill="none" stroke="#e0e0e0" stroke-width="1.2"/><path d="M5.5 9h7M5.5 9l2-2M5.5 9l2 2M12.5 9l-2-2M12.5 9l-2 2" stroke="#e0e0e0" stroke-width="1"/><path d="M9 3.5v11" stroke="#e0e0e0" stroke-width=".6" stroke-dasharray="1 1"/></svg>
<svg style="left:929px;top:81px;" width="18" height="18" viewBox="0 0 18 18"><circle cx="9" cy="9" r="5.8" fill="none" stroke="#e0e0e0" stroke-width="1.5"/><path d="M2.5 5.5 L6 3 L6.5 7Z" fill="#e0e0e0"/><rect x="6.5" y="6.5" width="5" height="5" fill="#e0e0e0" transform="rotate(20 9 9)"/></svg>
<svg style="left:951px;top:81px;" width="18" height="18" viewBox="0 0 18 18"><rect x="5" y="5" width="8" height="8" fill="#e0e0e0"/><path d="M3 3l2.5 2.5M15 3l-2.5 2.5M3 15l2.5-2.5M15 15l-2.5-2.5" stroke="#e0e0e0" stroke-width="1.4"/></svg>
<svg style="left:972px;top:81px;" width="18" height="18" viewBox="0 0 18 18"><circle cx="9" cy="9" r="5.8" fill="none" stroke="#e0e0e0" stroke-width="1.5"/><path d="M15.5 5.5 L12 3 L11.5 7Z" fill="#e0e0e0"/><rect x="6.5" y="6.5" width="5" height="5" fill="#e0e0e0" transform="rotate(-20 9 9)"/></svg>
<svg style="left:999px;top:81px;" width="18" height="18" viewBox="0 0 18 18"><rect x="3.5" y="7" width="4.5" height="8" fill="#e0e0e0"/><rect x="10" y="7" width="4.5" height="8" fill="none" stroke="#e0e0e0" stroke-width="1"/><path d="M5 6 Q9 1.5 13 6" fill="none" stroke="#e0e0e0" stroke-width="1"/></svg>
<div style="left:828px;top:101px;width:196px;height:21.5px;background:#4a4845"></div>
<div style="left:911.5px;top:102.5px;width:29.5px;height:20px;background:#d81e1e"></div>
<svg style="left:913.5px;top:104.5px;" width="25.5" height="16" viewBox="0 0 25.5 16"><rect width="25.5" height="16" fill="#f1d39c"/><ellipse cx="12" cy="9" rx="6.5" ry="6" fill="#fff" stroke="#222" stroke-width=".9"/><circle cx="9" cy="10" r="2" fill="#f6a596"/><circle cx="15" cy="10" r="2" fill="#f6a596"/><path d="M15.5 4 Q17 2 19 2.5" stroke="#2a2" stroke-width="1.2" fill="none"/><rect x="9" y="13" width="6" height="3" fill="#fff"/><path d="M4 4 l2 -1" stroke="#e44" stroke-width="1.5"/></svg>
<div style="left:828px;top:122.5px;width:196px;height:4px;background:#1d2227"></div>
<div style="left:828px;top:127px;width:196px;height:1px;background:#5f7f95"></div>
<div style="left:828px;top:128px;width:196px;height:16px;background:#333232"></div>
<svg style="left:999.5px;top:131px;" width="9" height="9" viewBox="0 0 9 9"><path d="M5.5 1.2 H8 V3.8" fill="none" stroke="#cfcfcf" stroke-width="1"/><path d="M8 1 L4.5 4.5" stroke="#cfcfcf" stroke-width="1"/><path d="M4.5 1.8 H1.2 V8 H7.4 V4.8" fill="none" stroke="#cfcfcf" stroke-width="1"/></svg>
<svg style="left:1012.5px;top:131px;" width="9" height="9" viewBox="0 0 9 9"><path d="M1.5 1.5 L7.5 7.5 M7.5 1.5 L1.5 7.5" stroke="#d4d4d4" stroke-width="1.8"/></svg>
<div class="t" style="left:906.4px;top:131.56px;font-family:'Liberation Sans',sans-serif;font-size:9.5px;line-height:9.5px;color:#c4c4c4;font-weight:400;transform:scaleX(0.8097);">Lớp</div>
<div class="t" style="left:832.8px;top:151.03px;font-family:'Liberation Sans',sans-serif;font-size:10px;line-height:10px;color:#cfcfcf;font-weight:400;transform:scaleX(0.8811);">Độ trong</div>
<div style="left:881px;top:149px;width:108px;height:12.5px;background:linear-gradient(to right,#8fd0fb,#4a9ee0);border-bottom:1px solid #2a5a80"></div>
<div class="t" style="left:994px;top:150.84px;font-family:'Liberation Sans',sans-serif;font-size:10px;line-height:10px;color:#d8d8d8;font-weight:400;transform:scaleX(0.8815);">100 %</div>
<div class="t" style="left:832.8px;top:171.23px;font-family:'Liberation Sans',sans-serif;font-size:10px;line-height:10px;color:#cfcfcf;font-weight:400;transform:scaleX(0.8992);">Pha trộn</div>
<div style="left:883px;top:166.5px;width:135.7px;height:17px;background:#474747;border-radius:2px"></div>
<div class="t" style="left:885px;top:170.84px;font-family:'Liberation Sans',sans-serif;font-size:10px;line-height:10px;color:#cfcfcf;font-weight:400;transform:scaleX(0.8292);">Bình thường</div>
<svg style="left:1008px;top:172px;" width="8" height="6" viewBox="0 0 8 6"><path d="M1 1.5 L7 1.5 L4 4.5Z" fill="#999"/></svg>
<div style="left:834.7px;top:192.8px;width:9px;height:9px;border:1px solid #4a4a4a"></div>
<div class="t" style="left:848.4px;top:191.84px;font-family:'Liberation Sans',sans-serif;font-size:10px;line-height:10px;color:#767676;font-weight:400;transform:scaleX(0.8460);">Bảo vệ alpha</div>
<div style="left:908px;top:192.8px;width:9px;height:9px;border:1px solid #d0d0d0"></div>
<div class="t" style="left:921px;top:191.84px;font-family:'Liberation Sans',sans-serif;font-size:10px;line-height:10px;color:#d0d0d0;font-weight:400;transform:scaleX(0.8458);">Xén bớt</div>
<div style="left:967px;top:192.8px;width:9px;height:9px;border:1px solid #d0d0d0"></div>
<div class="t" style="left:980px;top:191.84px;font-family:'Liberation Sans',sans-serif;font-size:10px;line-height:10px;color:#d0d0d0;font-weight:400;transform:scaleX(0.8134);">Khóa</div>
<div style="left:830px;top:208px;width:176px;height:74.5px;background:#4a4a4a"></div>
<div style="left:830px;top:208px;width:176px;height:30.5px;background:#5b5b5b"></div>
<div style="left:830px;top:239.5px;width:15.5px;height:31.5px;background:#575757"></div>
<div style="left:845.5px;top:239.5px;width:160.5px;height:31.5px;background:#4a92d5"></div>
<div style="left:830px;top:271.5px;width:176px;height:11px;background:#5b5b5b"></div>
<svg style="left:833px;top:218.3px;" width="10" height="10" viewBox="0 0 10 10"><defs><radialGradient id="rg" cx=".4" cy=".35"><stop offset="0" stop-color="#fff"/><stop offset="1" stop-color="#bdbdbd"/></radialGradient></defs><circle cx="5" cy="5" r="4" fill="url(#rg)"/></svg>
<svg style="left:833px;top:250.5px;" width="10" height="10" viewBox="0 0 10 10"><defs><radialGradient id="rg" cx=".4" cy=".35"><stop offset="0" stop-color="#fff"/><stop offset="1" stop-color="#bdbdbd"/></radialGradient></defs><circle cx="5" cy="5" r="4" fill="url(#rg)"/></svg>
<svg style="left:857.3px;top:213.5px;" width="28" height="20" viewBox="0 0 28 20"><defs><pattern id="chk2" width="6" height="6" patternUnits="userSpaceOnUse"><rect width="6" height="6" fill="#fff"/><rect width="3" height="3" fill="#e6e6e6"/><rect x="3" y="3" width="3" height="3" fill="#e6e6e6"/></pattern></defs><rect width="28" height="20" fill="url(#chk2)"/><ellipse cx="13" cy="10" rx="7" ry="6.5" fill="#fff" stroke="#333" stroke-width="1"/><circle cx="10" cy="11.5" r="2.2" fill="#f6a596"/><circle cx="16" cy="11.5" r="2.2" fill="#f6a596"/><path d="M18 4 Q20 2 22 3" stroke="#2a6" stroke-width="1.2" fill="none"/><path d="M10 16.5 h6 v3.5 h-6z" fill="#fff" stroke="#333" stroke-width=".6"/></svg>
<svg style="left:857.3px;top:250px;" width="28" height="10.5" viewBox="0 0 28 10.5"><rect width="28" height="10.5" fill="url(#chk2)"/></svg>
<svg style="left:857.3px;top:274px;" width="28" height="8.5" viewBox="0 0 28 8.5"><rect width="28" height="8.5" fill="#f0d49c"/><rect x="2" y="3" width="24" height="3" fill="#f2b08a" opacity=".7"/><circle cx="5" cy="4" r="1.2" fill="#d33"/></svg>
<div class="t" style="left:898.6px;top:218.53px;font-family:'Liberation Sans',sans-serif;font-size:10px;line-height:10px;color:#f0f0f0;font-weight:400;transform:scaleX(0.9892);">Lớp2</div>
<div class="t" style="left:898.6px;top:250.34px;font-family:'Liberation Sans',sans-serif;font-size:10px;line-height:10px;color:#f4f4f4;font-weight:700;transform:scaleX(1.0724);">Mynh</div>
<svg style="left:988.5px;top:248.5px;" width="14.5" height="14.5" viewBox="0 0 14.5 14.5"><g fill="#fff"><circle cx="7.25" cy="7.25" r="4.3"/><g stroke="#fff" stroke-width="2"><path d="M7.25 0.8V13.7M0.8 7.25H13.7M2.7 2.7L11.8 11.8M11.8 2.7L2.7 11.8"/></g></g><circle cx="7.25" cy="7.25" r="1.6" fill="#4a92d5"/></svg>
<div style="left:1006px;top:208px;width:18px;height:75px;background:#262626"></div>
<svg style="left:1007px;top:208px;" width="15" height="9" viewBox="0 0 15 9"><path d="M7.5 2 L11 7 H4Z" fill="#bdbdbd"/></svg>
<div style="left:1007.5px;top:216.7px;width:14.5px;height:43.7px;background:#5c5c5c;border-radius:4px"></div>
<div style="left:1007.5px;top:260.4px;width:14.5px;height:14px;background:#3a3a3a"></div>
<svg style="left:1007px;top:274px;" width="15" height="9" viewBox="0 0 15 9"><path d="M7.5 7 L11 2 H4Z" fill="#bdbdbd"/></svg>
<div style="left:828px;top:282.5px;width:196px;height:1.5px;background:#1e1e1e"></div>
<div style="left:833px;top:285.4px;width:18.5px;height:18.4px;background:#3e3e3e;border:1px solid #4b4b4b;border-radius:3px"></div>
<div style="left:854px;top:285.4px;width:18.8px;height:18.4px;background:#3e3e3e;border:1px solid #4b4b4b;border-radius:3px"></div>
<div style="left:876px;top:285.4px;width:18.4px;height:18.4px;background:#3e3e3e;border:1px solid #4b4b4b;border-radius:3px"></div>
<div style="left:898px;top:285.4px;width:24px;height:18.4px;background:#3e3e3e;border:1px solid #4b4b4b;border-radius:3px"></div>
<div style="left:925px;top:285.4px;width:18px;height:18.4px;background:#3e3e3e;border:1px solid #4b4b4b;border-radius:3px"></div>
<div style="left:952px;top:285.4px;width:18.5px;height:18.4px;background:#3e3e3e;border:1px solid #4b4b4b;border-radius:3px"></div>
<div style="left:974px;top:285.4px;width:18.1px;height:18.4px;background:#1e1e1e;border:1px solid #4b4b4b;border-radius:3px"></div>
<div style="left:1001px;top:285.4px;width:18px;height:18.4px;background:#3e3e3e;border:1px solid #4b4b4b;border-radius:3px"></div>
<div style="left:947px;top:290px;width:1.5px;height:9px;background:#444"></div>
<div style="left:996px;top:290px;width:1.5px;height:9px;background:#444"></div>
<svg style="left:833px;top:285.5px;" width="19" height="18" viewBox="0 0 19 18"><path d="M4.5 3 H10.5 L13.5 6 V15 H4.5Z" fill="none" stroke="#e0e0e0" stroke-width="1.1"/></svg>
<svg style="left:854.5px;top:285.5px;" width="19" height="18" viewBox="0 0 19 18"><path d="M4.5 3 H10.5 L13.5 6 V15 H4.5Z" fill="none" stroke="#e0e0e0" stroke-width="1.1"/><rect x="7" y="8" width="4" height="5" fill="none" stroke="#e0e0e0" stroke-width=".9"/><circle cx="9" cy="10.5" r="1" fill="#e0e0e0"/></svg>
<svg style="left:876px;top:285.5px;" width="19" height="18" viewBox="0 0 19 18"><path d="M4.5 3 H10.5 L13.5 6 V15 H4.5Z" fill="none" stroke="#e0e0e0" stroke-width="1.1"/><text x="9" y="13.5" font-size="7" font-family="Liberation Sans" fill="#e0e0e0" text-anchor="middle">1</text></svg>
<svg style="left:898px;top:285.5px;" width="24" height="18" viewBox="0 0 24 18"><path d="M4 3 H9.5 L12 5.5 V14 H4Z" fill="none" stroke="#e0e0e0" stroke-width="1.1"/><path d="M10 10.5v6M7 13.5h6" stroke="#e0e0e0" stroke-width="1.6"/><path d="M15 8.5 L20 8.5 L17.5 11.5Z" fill="#e0e0e0"/></svg>
<svg style="left:925px;top:285.5px;" width="18" height="18" viewBox="0 0 18 18"><path d="M3 5 H7.5 L8.5 6.5 H15 V14 H3Z" fill="#e0e0e0"/></svg>
<svg style="left:952px;top:285.5px;" width="19" height="18" viewBox="0 0 19 18"><rect x="4" y="6" width="8" height="8" fill="none" stroke="#e0e0e0" stroke-width="1.1"/><path d="M7 6 V3.5 H15 V11.5 H12" fill="none" stroke="#e0e0e0" stroke-width="1.1"/></svg>
<svg style="left:973.6px;top:285.5px;" width="18" height="18" viewBox="0 0 18 18"><rect x="3" y="3" width="4.5" height="4.5" fill="#e0e0e0"/><rect x="3" y="10" width="4.5" height="4.5" fill="#e0e0e0"/><rect x="10.5" y="6.5" width="5" height="5" fill="#e0e0e0"/><path d="M7.5 9h3" stroke="#e0e0e0" stroke-width=".8"/></svg>
<svg style="left:1001px;top:285.5px;" width="18" height="18" viewBox="0 0 18 18"><rect x="4" y="6" width="10" height="9" fill="none" stroke="#e0e0e0" stroke-width="1.2"/><path d="M3 5h12M7 3.5h4M7 7.5v6M9 7.5v6M11 7.5v6" stroke="#e0e0e0" stroke-width="1.2"/></svg>
<div style="left:828px;top:306px;width:196px;height:6px;background:#1d2227"></div>
<div style="left:828px;top:313px;width:196px;height:1px;background:#5f7f95"></div>
<div style="left:828px;top:314px;width:196px;height:16px;background:#333232"></div>
<svg style="left:999.5px;top:317px;" width="9" height="9" viewBox="0 0 9 9"><path d="M5.5 1.2 H8 V3.8" fill="none" stroke="#cfcfcf" stroke-width="1"/><path d="M8 1 L4.5 4.5" stroke="#cfcfcf" stroke-width="1"/><path d="M4.5 1.8 H1.2 V8 H7.4 V4.8" fill="none" stroke="#cfcfcf" stroke-width="1"/></svg>
<svg style="left:1012.5px;top:317px;" width="9" height="9" viewBox="0 0 9 9"><path d="M1.5 1.5 L7.5 7.5 M7.5 1.5 L1.5 7.5" stroke="#d4d4d4" stroke-width="1.8"/></svg>
<div class="t" style="left:893px;top:317.46px;font-family:'Liberation Sans',sans-serif;font-size:9.5px;line-height:9.5px;color:#c4c4c4;font-weight:400;transform:scaleX(0.9351);">Reference</div>
<div style="left:831px;top:333.3px;width:18.5px;height:17.7px;background:#4a4a4a;border:1px solid #555;border-radius:3px"></div>
<div style="left:853px;top:333.3px;width:18.5px;height:17.7px;background:#4a4a4a;border:1px solid #555;border-radius:3px"></div>
<div style="left:874px;top:333.3px;width:18.5px;height:17.7px;background:#1e1e1e;border:1px solid #555;border-radius:3px"></div>
<div style="left:902px;top:333.3px;width:18.5px;height:17.7px;background:#1e1e1e;border:1px solid #555;border-radius:3px"></div>
<div style="left:923px;top:333.3px;width:18.5px;height:17.7px;background:#1e1e1e;border:1px solid #555;border-radius:3px"></div>
<div style="left:945px;top:333.3px;width:18.5px;height:17.7px;background:#1e1e1e;border:1px solid #555;border-radius:3px"></div>
<div style="left:971px;top:333.3px;width:18.5px;height:17.7px;background:#1e1e1e;border:1px solid #555;border-radius:3px"></div>
<div style="left:993px;top:333.3px;width:18.5px;height:17.7px;background:#4a97d8;border:1px solid #5aa5e5;border-radius:3px"></div>
<div style="left:1015px;top:333.3px;width:8px;height:17.7px;background:#4a4a4a;border-radius:3px"></div>
<div style="left:897px;top:338px;width:1.5px;height:8px;background:#444"></div>
<div style="left:966.5px;top:338px;width:1.5px;height:8px;background:#444"></div>
<svg style="left:832px;top:333px;" width="18" height="18" viewBox="0 0 18 18"><path d="M5 11.5 Q2.5 11.5 2.8 9 Q3.2 7 5.2 7.2 Q5.6 3.6 9 3.6 Q12.5 3.7 12.8 7.2 Q15.4 7.2 15.4 9.3 Q15.4 11.5 13 11.5Z" fill="#e0e0e0"/><path d="M9 9.5 V14.5" stroke="#e0e0e0" stroke-width="2"/><path d="M6.3 12.8 L9 16.5 L11.7 12.8Z" fill="#e0e0e0"/></svg>
<svg style="left:853px;top:333px;" width="18" height="18" viewBox="0 0 18 18"><path d="M3 5 H7.5 L8.5 6.5 H15 V14 H3Z" fill="none" stroke="#e0e0e0" stroke-width="1.1"/><path d="M3 14 L5 8.5 H16.5 L15 14Z" fill="#e0e0e0"/></svg>
<svg style="left:874.5px;top:333px;" width="18" height="18" viewBox="0 0 18 18"><path d="M5.5 5.5 L12.5 12.5 M12.5 5.5 L5.5 12.5" stroke="#e0e0e0" stroke-width="1.6"/></svg>
<svg style="left:902px;top:333px;" width="18" height="18" viewBox="0 0 18 18"><circle cx="8" cy="8" r="4.6" fill="none" stroke="#e0e0e0" stroke-width="1.5"/><path d="M11.3 11.3 L15 15" stroke="#e0e0e0" stroke-width="2"/><path d="M5.8 8h4.4M8 5.8v4.4" stroke="#e0e0e0" stroke-width="1.3"/></svg>
<svg style="left:923px;top:333px;" width="18" height="18" viewBox="0 0 18 18"><rect x="3.5" y="3.5" width="11" height="11" fill="none" stroke="#e0e0e0" stroke-width="1.2"/><path d="M5.5 9h7M5.5 9l2-2M5.5 9l2 2M12.5 9l-2-2M12.5 9l-2 2" stroke="#e0e0e0" stroke-width="1"/><path d="M9 3.5v11" stroke="#e0e0e0" stroke-width=".6" stroke-dasharray="1 1"/></svg>
<svg style="left:945.5px;top:333px;" width="18" height="18" viewBox="0 0 18 18"><circle cx="8" cy="8" r="4.6" fill="none" stroke="#e0e0e0" stroke-width="1.5"/><path d="M11.3 11.3 L15 15" stroke="#e0e0e0" stroke-width="2"/><path d="M5.8 8h4.4" stroke="#e0e0e0" stroke-width="1.3"/></svg>
<svg style="left:971px;top:333px;" width="18" height="18" viewBox="0 0 18 18"><path d="M12 6.5 L5 13.5 L4.5 15 L6 14.5 L13 7.5" fill="none" stroke="#e0e0e0" stroke-width="1.3"/><path d="M11 5 L15 9" stroke="#e0e0e0" stroke-width="1.6"/><path d="M13 4 Q14.5 2.5 15.5 3.5 Q16.5 4.5 15 6Z" fill="#e0e0e0"/></svg>
<svg style="left:993px;top:333px;" width="18" height="18" viewBox="0 0 18 18"><path d="M5 10 V5.5 Q5 4.5 6 4.5 Q7 4.5 7 5.5 V9 V3.5 Q7 2.5 8 2.5 Q9 2.5 9 3.5 V9 V3 Q9 2 10 2 Q11 2 11 3 V9 V4.5 Q11 3.5 12 3.5 Q13 3.5 13 4.5 V11 L14.5 8.5 Q15.5 7.5 16.3 8.3 L13.5 14 Q12.5 16 10 16 H8.5 Q5 16 5 12Z" fill="#fff"/></svg>
<svg style="left:828px;top:353.5px;" width="196" height="32.5" viewBox="0 0 196 32.5"><defs><pattern id="chk3" width="8" height="8" patternUnits="userSpaceOnUse"><rect width="8" height="8" fill="#fff"/><rect width="4" height="4" fill="#ececec"/><rect x="4" y="4" width="4" height="4" fill="#ececec"/></pattern></defs><rect width="196" height="32.5" fill="url(#chk3)"/></svg>
<div style="left:828px;top:386px;width:196px;height:3px;background:#1d2227"></div>
<div style="left:828px;top:389px;width:196px;height:1px;background:#5f7f95"></div>
<div style="left:828px;top:390px;width:196px;height:16px;background:#333232"></div>
<svg style="left:999.5px;top:393px;" width="9" height="9" viewBox="0 0 9 9"><path d="M5.5 1.2 H8 V3.8" fill="none" stroke="#cfcfcf" stroke-width="1"/><path d="M8 1 L4.5 4.5" stroke="#cfcfcf" stroke-width="1"/><path d="M4.5 1.8 H1.2 V8 H7.4 V4.8" fill="none" stroke="#cfcfcf" stroke-width="1"/></svg>
<svg style="left:1012.5px;top:393px;" width="9" height="9" viewBox="0 0 9 9"><path d="M1.5 1.5 L7.5 7.5 M7.5 1.5 L1.5 7.5" stroke="#d4d4d4" stroke-width="1.8"/></svg>
<div class="t" style="left:894px;top:393.96px;font-family:'Liberation Sans',sans-serif;font-size:9.5px;line-height:9.5px;color:#c4c4c4;font-weight:400;transform:scaleX(0.8490);">Brush Size</div>
<div style="left:828px;top:406px;width:180px;height:130px;background:#4a4845"></div>
<div style="left:828px;top:406px;width:31px;height:9.5px;background:#5a5a5a"></div>
<div class="t" style="left:841.0px;top:407.30px;font-family:'Liberation Sans',sans-serif;font-size:8.5px;line-height:8.5px;color:#eeeeee;font-weight:400;transform:scaleX(1.0139);">5</div>
<div style="left:861px;top:406px;width:30px;height:9.5px;background:#5a5a5a"></div>
<div class="t" style="left:873.5px;top:407.30px;font-family:'Liberation Sans',sans-serif;font-size:8.5px;line-height:8.5px;color:#eeeeee;font-weight:400;transform:scaleX(1.0139);">7</div>
<div style="left:893px;top:406px;width:30px;height:9.5px;background:#5a5a5a"></div>
<div class="t" style="left:903.0px;top:407.30px;font-family:'Liberation Sans',sans-serif;font-size:8.5px;line-height:8.5px;color:#eeeeee;font-weight:400;transform:scaleX(1.0561);">10</div>
<div style="left:925px;top:406px;width:30px;height:9.5px;background:#5a5a5a"></div>
<div class="t" style="left:935.0px;top:407.30px;font-family:'Liberation Sans',sans-serif;font-size:8.5px;line-height:8.5px;color:#eeeeee;font-weight:400;transform:scaleX(1.0561);">12</div>
<div style="left:957px;top:406px;width:30px;height:9.5px;background:#5a5a5a"></div>
<div class="t" style="left:967.0px;top:407.30px;font-family:'Liberation Sans',sans-serif;font-size:8.5px;line-height:8.5px;color:#eeeeee;font-weight:400;transform:scaleX(1.0561);">15</div>
<div style="left:828px;top:416.5px;width:31px;height:38.5px;background:radial-gradient(circle at 50% 42%, #5f5f5f 0, #5a5a5a 40%, #565656 100%)"></div>
<svg style="left:834.5px;top:423.0px;" width="18" height="18" viewBox="0 0 18 18"><circle cx="9.0" cy="9.0" r="8.0" fill="#f2f2f2"/></svg>
<div class="t" style="left:838.5px;top:446.60px;font-family:'Liberation Sans',sans-serif;font-size:8.5px;line-height:8.5px;color:#eeeeee;font-weight:400;transform:scaleX(1.0561);">20</div>
<div style="left:861px;top:416.5px;width:30px;height:38.5px;background:radial-gradient(circle at 50% 42%, #5f5f5f 0, #5a5a5a 40%, #565656 100%)"></div>
<svg style="left:865.0px;top:421.0px;" width="22" height="22" viewBox="0 0 22 22"><circle cx="11.0" cy="11.0" r="10.0" fill="#f2f2f2"/></svg>
<div class="t" style="left:871.0px;top:446.60px;font-family:'Liberation Sans',sans-serif;font-size:8.5px;line-height:8.5px;color:#eeeeee;font-weight:400;transform:scaleX(1.0561);">25</div>
<div style="left:893px;top:416.5px;width:30px;height:38.5px;background:radial-gradient(circle at 50% 42%, #5f5f5f 0, #5a5a5a 40%, #565656 100%)"></div>
<svg style="left:897.0px;top:421.0px;" width="22" height="22" viewBox="0 0 22 22"><circle cx="11.0" cy="11.0" r="10.0" fill="#f2f2f2"/></svg>
<div class="t" style="left:903.0px;top:446.60px;font-family:'Liberation Sans',sans-serif;font-size:8.5px;line-height:8.5px;color:#eeeeee;font-weight:400;transform:scaleX(1.0561);">30</div>
<div style="left:925px;top:416.5px;width:30px;height:38.5px;background:radial-gradient(circle at 50% 42%, #5f5f5f 0, #5a5a5a 40%, #565656 100%)"></div>
<svg style="left:929.0px;top:421.0px;" width="22" height="22" viewBox="0 0 22 22"><circle cx="11.0" cy="11.0" r="10.0" fill="#f2f2f2"/></svg>
<div class="t" style="left:935.0px;top:446.60px;font-family:'Liberation Sans',sans-serif;font-size:8.5px;line-height:8.5px;color:#eeeeee;font-weight:400;transform:scaleX(1.0561);">40</div>
<div style="left:957px;top:416.5px;width:30px;height:38.5px;background:radial-gradient(circle at 50% 42%, #5f5f5f 0, #5a5a5a 40%, #565656 100%)"></div>
<svg style="left:961.0px;top:421.0px;" width="22" height="22" viewBox="0 0 22 22"><circle cx="11.0" cy="11.0" r="10.0" fill="#f2f2f2"/></svg>
<div class="t" style="left:967.0px;top:446.60px;font-family:'Liberation Sans',sans-serif;font-size:8.5px;line-height:8.5px;color:#eeeeee;font-weight:400;transform:scaleX(1.0561);">50</div>
<div style="left:828px;top:456.8px;width:31px;height:38.5px;background:radial-gradient(circle at 50% 42%, #5f5f5f 0, #5a5a5a 40%, #565656 100%)"></div>
<svg style="left:832.5px;top:461.3px;" width="22" height="22" viewBox="0 0 22 22"><circle cx="11.0" cy="11.0" r="10.0" fill="#f2f2f2"/></svg>
<div class="t" style="left:838.5px;top:486.90px;font-family:'Liberation Sans',sans-serif;font-size:8.5px;line-height:8.5px;color:#eeeeee;font-weight:400;transform:scaleX(1.0561);">70</div>
<div style="left:861px;top:456.8px;width:30px;height:38.5px;background:radial-gradient(circle at 50% 42%, #5f5f5f 0, #5a5a5a 40%, #565656 100%)"></div>
<svg style="left:865.0px;top:461.3px;" width="22" height="22" viewBox="0 0 22 22"><circle cx="11.0" cy="11.0" r="10.0" fill="#f2f2f2"/></svg>
<div class="t" style="left:868.5px;top:486.90px;font-family:'Liberation Sans',sans-serif;font-size:8.5px;line-height:8.5px;color:#eeeeee;font-weight:400;transform:scaleX(1.0573);">100</div>
<div style="left:893px;top:456.8px;width:30px;height:38.5px;background:radial-gradient(circle at 50% 42%, #5f5f5f 0, #5a5a5a 40%, #565656 100%)"></div>
<svg style="left:897.0px;top:461.3px;" width="22" height="22" viewBox="0 0 22 22"><circle cx="11.0" cy="11.0" r="10.0" fill="#f2f2f2"/></svg>
<div class="t" style="left:900.5px;top:486.90px;font-family:'Liberation Sans',sans-serif;font-size:8.5px;line-height:8.5px;color:#eeeeee;font-weight:400;transform:scaleX(1.0573);">150</div>
<div style="left:925px;top:456.8px;width:30px;height:38.5px;background:radial-gradient(circle at 50% 42%, #5f5f5f 0, #5a5a5a 40%, #565656 100%)"></div>
<svg style="left:929.0px;top:461.3px;" width="22" height="22" viewBox="0 0 22 22"><circle cx="11.0" cy="11.0" r="10.0" fill="#f2f2f2"/></svg>
<div class="t" style="left:932.5px;top:486.90px;font-family:'Liberation Sans',sans-serif;font-size:8.5px;line-height:8.5px;color:#eeeeee;font-weight:400;transform:scaleX(1.0573);">200</div>
<div style="left:957px;top:456.8px;width:30px;height:38.5px;background:radial-gradient(circle at 50% 42%, #5f5f5f 0, #5a5a5a 40%, #565656 100%)"></div>
<svg style="left:961.0px;top:461.3px;" width="22" height="22" viewBox="0 0 22 22"><circle cx="11.0" cy="11.0" r="10.0" fill="#f2f2f2"/></svg>
<div class="t" style="left:964.5px;top:486.90px;font-family:'Liberation Sans',sans-serif;font-size:8.5px;line-height:8.5px;color:#eeeeee;font-weight:400;transform:scaleX(1.0573);">300</div>
<div style="left:828px;top:497.1px;width:31px;height:38.5px;background:radial-gradient(circle at 50% 42%, #5f5f5f 0, #5a5a5a 40%, #565656 100%)"></div>
<svg style="left:832.5px;top:501.6px;" width="22" height="22" viewBox="0 0 22 22"><circle cx="11.0" cy="11.0" r="10.0" fill="#f2f2f2"/></svg>
<div class="t" style="left:836.0px;top:527.20px;font-family:'Liberation Sans',sans-serif;font-size:8.5px;line-height:8.5px;color:#eeeeee;font-weight:400;transform:scaleX(1.0573);">400</div>
<div style="left:861px;top:497.1px;width:30px;height:38.5px;background:radial-gradient(circle at 50% 42%, #5f5f5f 0, #5a5a5a 40%, #565656 100%)"></div>
<svg style="left:865.0px;top:501.6px;" width="22" height="22" viewBox="0 0 22 22"><circle cx="11.0" cy="11.0" r="10.0" fill="#f2f2f2"/></svg>
<div class="t" style="left:868.5px;top:527.20px;font-family:'Liberation Sans',sans-serif;font-size:8.5px;line-height:8.5px;color:#eeeeee;font-weight:400;transform:scaleX(1.0573);">500</div>
<div style="left:893px;top:497.1px;width:30px;height:38.5px;background:radial-gradient(circle at 50% 42%, #5f5f5f 0, #5a5a5a 40%, #565656 100%)"></div>
<svg style="left:897.0px;top:501.6px;" width="22" height="22" viewBox="0 0 22 22"><circle cx="11.0" cy="11.0" r="10.0" fill="#f2f2f2"/></svg>
<div class="t" style="left:900.5px;top:527.20px;font-family:'Liberation Sans',sans-serif;font-size:8.5px;line-height:8.5px;color:#eeeeee;font-weight:400;transform:scaleX(1.0573);">700</div>
<div style="left:925px;top:497.1px;width:30px;height:38.5px;background:radial-gradient(circle at 50% 42%, #5f5f5f 0, #5a5a5a 40%, #565656 100%)"></div>
<svg style="left:929.0px;top:501.6px;" width="22" height="22" viewBox="0 0 22 22"><circle cx="11.0" cy="11.0" r="10.0" fill="#f2f2f2"/></svg>
<div class="t" style="left:930.25px;top:527.20px;font-family:'Liberation Sans',sans-serif;font-size:8.5px;line-height:8.5px;color:#eeeeee;font-weight:400;transform:scaleX(1.0306);">1000</div>
<div style="left:1008px;top:406px;width:16px;height:130px;background:#262626"></div>
<svg style="left:1008.5px;top:406px;" width="15" height="10" viewBox="0 0 15 10"><path d="M7.5 2.5 L11 7.5 H4Z" fill="#bdbdbd"/></svg>
<div style="left:1009px;top:417px;width:13px;height:38px;background:#333"></div>
<div style="left:1009px;top:455.4px;width:13px;height:70.6px;background:#5e5e5e;border-radius:4px"></div>
<svg style="left:1008.5px;top:526px;" width="15" height="10" viewBox="0 0 15 10"><path d="M7.5 7.5 L11 2.5 H4Z" fill="#bdbdbd"/></svg>
<div style="left:0px;top:536px;width:1024px;height:15.5px;background:#262626"></div>
<div class="t" style="left:5px;top:539.46px;font-family:'Liberation Sans',sans-serif;font-size:9.5px;line-height:9.5px;color:#c8c8c8;font-weight:400;transform:scaleX(0.9398);">6500 * 5000 pixel</div>
<div class="t" style="left:81.5px;top:539.46px;font-family:'Liberation Sans',sans-serif;font-size:9.5px;line-height:9.5px;color:#c8c8c8;font-weight:400;transform:scaleX(0.9468);">(47.2 * 36.3cm)</div>
<div class="t" style="left:151px;top:539.46px;font-family:'Liberation Sans',sans-serif;font-size:9.5px;line-height:9.5px;color:#c8c8c8;font-weight:400;transform:scaleX(0.9464);">350 dpi</div>
<div class="t" style="left:188.5px;top:539.46px;font-family:'Liberation Sans',sans-serif;font-size:9.5px;line-height:9.5px;color:#c8c8c8;font-weight:400;transform:scaleX(0.8312);">10 %</div>
<div class="t" style="left:214px;top:539.46px;font-family:'Liberation Sans',sans-serif;font-size:9.5px;line-height:9.5px;color:#c8c8c8;font-weight:400;transform:scaleX(0.9466);">( 6799, 3482 )</div>
<div style="left:0px;top:551.5px;width:1024px;height:24.5px;background:#d3e2ec"></div>
<svg style="left:7px;top:557px;" width="15" height="14" viewBox="0 0 15 14"><path d="M0.5 1.5 L6.5 0.8 V6.5 H0.5Z M7.5 0.7 L14 0 V6.5 H7.5Z M0.5 7.5 H6.5 V13.2 L0.5 12.5Z M7.5 7.5 H14 V14 L7.5 13.3Z" fill="#0c0c0c"/></svg>
<svg style="left:36px;top:556px;" width="16" height="16" viewBox="0 0 16 16"><circle cx="9.5" cy="6.5" r="4.3" fill="none" stroke="#111" stroke-width="1.3"/><path d="M6.5 9.5 L1.5 14.5" stroke="#111" stroke-width="1.4"/></svg>
<svg style="left:65px;top:557px;" width="15" height="15" viewBox="0 0 15 15"><circle cx="7.5" cy="7.5" r="5.6" fill="none" stroke="#111" stroke-width="1.6"/></svg>
<svg style="left:93px;top:557px;" width="16" height="15" viewBox="0 0 16 15"><rect x="1.5" y="3.5" width="10" height="8" fill="none" stroke="#111" stroke-width="1.3"/><path d="M1.5 1h10M1.5 14h10" stroke="#111" stroke-width="1.3"/><path d="M14 1.5v2M14 5.5v9" stroke="#111" stroke-width="1.5"/></svg>
<svg style="left:125px;top:557px;" width="14" height="14" viewBox="0 0 14 14"><circle cx="7" cy="7" r="6.2" fill="#f04a3a"/><circle cx="7" cy="7" r="4" fill="#fff"/><path d="M7 3 A4 4 0 0 0 7 11" fill="#f7b531"/><circle cx="7.5" cy="7" r="2.3" fill="#e83a30"/></svg>
<svg style="left:154.5px;top:557px;" width="14" height="14" viewBox="0 0 14 14"><defs><linearGradient id="edg" x1="0" y1="0" x2="1" y2="1"><stop offset="0" stop-color="#38c77a"/><stop offset=".5" stop-color="#1aa1e0"/><stop offset="1" stop-color="#0a5fb0"/></linearGradient></defs><circle cx="7" cy="7" r="6.5" fill="url(#edg)"/><path d="M4 8.5 Q4.5 5 8 5 Q11 5.2 11.5 7.5 H6.5 Q6.8 10 10 10 Q11.5 10 12.5 9.3 Q11 13 7 13 Q4 12.5 4 8.5Z" fill="#fff" opacity=".85"/></svg>
<svg style="left:184.5px;top:557px;" width="14" height="14" viewBox="0 0 14 14"><path d="M1 2.5 H5.5 L7 4 H13 V12.5 H1Z" fill="#f7c548"/><rect x="1" y="5" width="12" height="7.5" fill="#fbd86a"/><rect x="4" y="8" width="6" height="4.5" fill="#2a7bd0"/><rect x="6" y="9.5" width="2" height="3" fill="#fbd86a"/></svg>
<svg style="left:213.5px;top:557px;" width="15" height="14" viewBox="0 0 15 14"><rect x="0.5" y="1" width="14" height="9.5" fill="#3f9ee8"/><rect x="1.5" y="2" width="12" height="7.5" fill="#7cc4f5"/><rect x="3" y="11.5" width="9" height="1.5" fill="#555"/></svg>
<svg style="left:243.5px;top:557px;" width="14" height="14" viewBox="0 0 14 14"><rect x="1" y="0.5" width="12" height="13" fill="#fff" stroke="#1f7a3f" stroke-width="1"/><text x="7" y="11" font-size="10" font-weight="700" font-family="Liberation Sans" fill="#1f7a3f" text-anchor="middle">X</text></svg>
<svg style="left:273px;top:557px;" width="14" height="14" viewBox="0 0 14 14"><rect x="1" y="0.5" width="12" height="13" fill="#fff" stroke="#2b5caa" stroke-width="1"/><text x="7" y="11" font-size="10" font-weight="700" font-family="Liberation Sans" fill="#2b5caa" text-anchor="middle">W</text></svg>
<svg style="left:303px;top:557px;" width="14" height="14" viewBox="0 0 14 14"><rect x="1" y="0.5" width="12" height="13" fill="#fff" stroke="#d04a22" stroke-width="1"/><text x="7" y="11" font-size="10" font-weight="700" font-family="Liberation Sans" fill="#d04a22" text-anchor="middle">P</text></svg>
<svg style="left:332px;top:557px;" width="14" height="14" viewBox="0 0 14 14"><circle cx="7" cy="7" r="6.5" fill="#e8453c"/><path d="M7 7 L1.3 10.3 A6.5 6.5 0 0 0 9.5 13 Z" fill="#34a853"/><path d="M7 7 L9.5 13 A6.5 6.5 0 0 0 12.6 3.8 Z" fill="#fbbc05"/><circle cx="7" cy="7" r="3" fill="#fff"/><circle cx="7" cy="7" r="2.2" fill="#4285f4"/></svg>
<div style="left:328.5px;top:574px;width:22px;height:2px;background:#3b7ac5"></div>
<div style="left:354.5px;top:551.5px;width:28.5px;height:24.5px;background:#eef3f6"></div>
<div style="left:354.5px;top:574px;width:28.5px;height:2px;background:#3b7ac5"></div>
<svg style="left:362px;top:558px;" width="12" height="12" viewBox="0 0 12 12"><circle cx="6" cy="6" r="5" fill="#e84a3a"/><path d="M6 1 A5 5 0 0 1 11 6 L6 6Z" fill="#f5b400"/><path d="M1 6 A5 5 0 0 0 6 11 L6 6Z" fill="#2f9be0"/><path d="M6 11 A5 5 0 0 0 11 6 L6 6Z" fill="#2eb872"/><circle cx="6" cy="6" r="2" fill="#fff" opacity=".9"/></svg>
<svg style="left:704px;top:557px;" width="18" height="14" viewBox="0 0 18 14"><path d="M4 10 Q1 10 1.5 7 Q2 5 4.5 5.3 Q5.5 2 9 2 Q12.5 2.2 13 5.5 Q16 5.5 16 8 Q16 10 13.5 10Z" fill="#9fcff2"/><path d="M6 11.5v2M9 11.5v2M12 11.5v2" stroke="#4aa0e0" stroke-width="1"/></svg>
<div class="t" style="left:728.5px;top:558.69px;font-family:'Liberation Sans',sans-serif;font-size:11px;line-height:11px;color:#111;font-weight:400;transform:scaleX(0.9418);">81°F</div>
<div class="t" style="left:757.8px;top:558.69px;font-family:'Liberation Sans',sans-serif;font-size:11px;line-height:11px;color:#111;font-weight:400;transform:scaleX(1.0096);">Light rain</div>
<svg style="left:813px;top:559px;" width="10" height="8" viewBox="0 0 10 8"><path d="M1 6.5 L5 2.5 L9 6.5" fill="none" stroke="#111" stroke-width="1.2"/></svg>
<svg style="left:830px;top:558px;" width="14" height="11" viewBox="0 0 14 11"><rect x="4" y="3" width="9" height="6" fill="#111"/><rect x="2" y="5" width="2" height="2" fill="#111"/><path d="M1 2l3 2" stroke="#111"/></svg>
<svg style="left:849.5px;top:557px;" width="14" height="13" viewBox="0 0 14 13"><path d="M1 4.5h3l3.5-3.5v11l-3.5-3.5h-3z" fill="#111"/><path d="M9.5 4 Q11 6.5 9.5 9M11.5 2.5 Q14 6.5 11.5 10.5" fill="none" stroke="#111" stroke-width="1"/></svg>
<svg style="left:870.5px;top:557px;" width="13" height="13" viewBox="0 0 13 13"><path d="M1.5 11.5 Q1.5 3 11 2M4 11.5 Q4 5.5 11 4.5M6.5 11.5 Q6.5 7.8 11 7" fill="none" stroke="#111" stroke-width="1.1"/><circle cx="10" cy="10.5" r="1.3" fill="#111"/></svg>
<svg style="left:889px;top:557px;" width="11" height="14" viewBox="0 0 11 14"><rect x="1.5" y="4" width="6.5" height="6" fill="none" stroke="#111" stroke-width="1.1"/><path d="M8 6l2.5-1.5v5L8 8" fill="#111"/><path d="M2 1.5h5M2 12.5h5" stroke="#111"/></svg>
<div class="t" style="left:908.5px;top:559.03px;font-family:'Liberation Sans',sans-serif;font-size:10px;line-height:10px;color:#111;font-weight:400;transform:scaleX(0.8767);">ENG</div>
<div class="t" style="left:939.5px;top:559.03px;font-family:'Liberation Sans',sans-serif;font-size:10px;line-height:10px;color:#111;font-weight:400;transform:scaleX(0.9208);">7:29 PM</div>
<svg style="left:990px;top:557px;" width="15" height="14" viewBox="0 0 15 14"><path d="M1 1.5 H14 V10.5 H9 L7.5 13 L6 10.5 H1Z" fill="#111"/><path d="M3.5 4.5h8M3.5 7h8" stroke="#d3e2ec" stroke-width="1"/></svg>
<svg style="left:200px;top:80px;" width="566" height="437" viewBox="200 80 566 437">
<defs>
<filter id="soft" x="-5%" y="-5%" width="110%" height="110%"><feGaussianBlur stdDeviation="0.5"/></filter>
<linearGradient id="fadeL" x1="0" y1="0" x2="0" y2="1"><stop offset="0" stop-color="#0c0c0c"/><stop offset=".8" stop-color="#0c0c0c"/><stop offset="1" stop-color="#0c0c0c" stop-opacity=".2"/></linearGradient>
</defs>
<!-- head fill -->
<path d="M392.0,376.0 C388.3,374.6 376.9,371.5 370.0,367.8 C363.1,364.1 355.8,359.6 350.5,354.0 C345.2,348.4 340.8,341.8 338.0,334.4 C335.2,327.0 334.6,317.6 334.0,309.4 C333.4,301.2 334.1,292.7 334.5,285.0 C334.9,277.3 335.1,271.2 336.6,263.0 C338.1,254.8 340.3,244.7 343.3,235.5 C346.3,226.3 349.8,216.1 354.4,207.8 C359.0,199.5 364.6,192.0 371.0,185.5 C377.4,179.0 384.7,173.8 393.0,169.0 C401.3,164.2 412.3,159.8 421.0,157.0 C429.7,154.2 437.2,153.2 445.0,152.5 C452.8,151.8 459.4,151.8 467.8,153.0 C476.2,154.2 486.4,156.2 495.6,159.4 C504.8,162.6 514.7,167.1 523.0,172.0 C531.3,176.9 539.1,181.9 545.6,188.6 C552.1,195.3 556.9,203.0 562.0,212.0 C567.1,221.0 572.3,232.6 576.0,242.8 C579.7,253.0 582.6,264.6 584.4,273.3 C586.2,282.0 587.2,287.1 587.0,295.0 C586.8,302.9 585.3,313.7 583.3,320.8 C581.3,327.9 578.6,332.3 574.8,337.8 C570.9,343.3 565.9,349.2 560.2,353.6 C554.5,358.1 548.1,361.5 540.8,364.5 C533.5,367.5 522.6,370.4 516.5,371.8 C510.4,373.2 506.3,372.8 504.3,373.0 L470,385 L430,385Z" fill="#fff"/>
<!-- body fill -->
<path d="M381,464 C384,430 390,400 395,376 L420,351 L483,352 L498,377 C505,400 512,430 515.5,466 C480,460 420,460 381,464Z" fill="#fff"/>
<!-- cheeks -->
<ellipse cx="385.5" cy="304.8" rx="43" ry="40.5" fill="#f7a891"/>
<ellipse cx="517.5" cy="313.5" rx="42" ry="40.8" fill="#f7a891"/>
<!-- cheek highlights -->
<g fill="#fff">
<path d="M360.5,295.5 Q363.5,289.5 368,293 L380.5,331 Q375,327 360.5,295.5Z"/>
<path d="M385,285.5 Q388,279.5 392,283 L403,316 Q397.5,312 385,285.5Z"/>
<path d="M502.5,299 Q505.5,293 509.5,297 L517,331.5 Q511.5,327 502.5,299Z"/>
<path d="M523.5,292 Q526.5,286 531,289.5 L541.5,318 Q536,314 523.5,292Z"/>
</g>
<!-- head outline -->
<path d="M392.0,376.0 C388.3,374.6 376.9,371.5 370.0,367.8 C363.1,364.1 355.8,359.6 350.5,354.0 C345.2,348.4 340.8,341.8 338.0,334.4 C335.2,327.0 334.6,317.6 334.0,309.4 C333.4,301.2 334.1,292.7 334.5,285.0 C334.9,277.3 335.1,271.2 336.6,263.0 C338.1,254.8 340.3,244.7 343.3,235.5 C346.3,226.3 349.8,216.1 354.4,207.8 C359.0,199.5 364.6,192.0 371.0,185.5 C377.4,179.0 384.7,173.8 393.0,169.0 C401.3,164.2 412.3,159.8 421.0,157.0 C429.7,154.2 437.2,153.2 445.0,152.5 C452.8,151.8 459.4,151.8 467.8,153.0 C476.2,154.2 486.4,156.2 495.6,159.4 C504.8,162.6 514.7,167.1 523.0,172.0 C531.3,176.9 539.1,181.9 545.6,188.6 C552.1,195.3 556.9,203.0 562.0,212.0 C567.1,221.0 572.3,232.6 576.0,242.8 C579.7,253.0 582.6,264.6 584.4,273.3 C586.2,282.0 587.2,287.1 587.0,295.0 C586.8,302.9 585.3,313.7 583.3,320.8 C581.3,327.9 578.6,332.3 574.8,337.8 C570.9,343.3 565.9,349.2 560.2,353.6 C554.5,358.1 548.1,361.5 540.8,364.5 C533.5,367.5 522.6,370.4 516.5,371.8 C510.4,373.2 506.3,372.8 504.3,373.0" fill="none" stroke="#0c0c0c" stroke-width="7.6" stroke-linecap="round"/>
<!-- eyes -->
<g stroke="#0c0c0c" stroke-width="6.2" stroke-linecap="round" fill="none">
<path d="M377.5,259 Q400,254 422,252.5"/>
<path d="M383.5,265 Q402,261.5 418,258"/>
<path d="M381,262 Q401,257.5 420,255"/>
<path d="M492.5,257.5 Q508,263 523.5,270"/>
<path d="M489.5,261 Q503,268 518,271.5"/>
</g>
<!-- cookie -->
<ellipse cx="444.5" cy="341" rx="34" ry="28" fill="#f3c38c" stroke="#0c0c0c" stroke-width="5"/>
<g fill="#eab070" opacity=".6"><circle cx="428" cy="335" r="1.5"/><circle cx="455" cy="328" r="1.2"/><circle cx="462" cy="345" r="1.5"/><circle cx="440" cy="350" r="1.3"/><circle cx="447" cy="362" r="1.2"/></g>
<!-- mouth -->
<path d="M436,303 Q432.5,314 441.5,315.5 Q449.5,316 450,304 Q451.5,314 459,314" fill="none" stroke="#0c0c0c" stroke-width="5.2" stroke-linecap="round"/><path d="M458,314 Q465,312.5 467.5,305" fill="none" stroke="#0c0c0c" stroke-width="3.6" stroke-linecap="round" opacity=".75"/><circle cx="436" cy="303" r="3.2" fill="#0c0c0c"/><circle cx="450" cy="304" r="3.2" fill="#0c0c0c"/>
<!-- hands fill -->
<path d="M381.5,461.0 C382.2,455.8 384.7,438.8 386.0,430.0 C387.3,421.2 388.4,414.5 389.5,408.0 C390.6,401.5 391.3,396.3 392.5,391.0 C393.7,385.7 394.9,380.6 396.5,376.0 C398.1,371.4 399.5,367.1 402.0,363.4 C404.5,359.7 408.4,355.9 411.6,354.0 C414.8,352.1 418.4,351.2 421.0,351.7 C423.6,352.2 425.6,354.3 427.0,357.0 C428.4,359.7 429.1,364.3 429.5,368.0 C429.9,371.7 429.6,375.8 429.5,379.0 C429.4,382.2 428.9,385.7 428.8,387.0 L440,400 L392,400Z" fill="#fff"/>
<path d="M464.7,384.0 C464.9,381.3 464.9,372.5 466.0,368.0 C467.1,363.5 468.7,359.7 471.0,357.0 C473.3,354.3 476.7,351.9 480.0,351.7 C483.3,351.5 488.1,352.9 491.0,355.6 C493.9,358.3 495.8,364.1 497.5,368.0 C499.2,371.9 499.7,375.7 501.0,379.0 C502.3,382.3 504.3,384.8 505.5,388.0 C506.7,391.2 507.2,393.5 508.0,398.0 C508.8,402.5 509.3,408.8 510.0,415.0 C510.7,421.2 511.2,426.8 512.0,435.0 C512.8,443.2 514.5,459.2 515.0,464.0 L500,430 L464,430Z" fill="#fff"/>
<!-- body/hands outline -->
<path d="M381.5,461.0 C382.2,455.8 384.7,438.8 386.0,430.0 C387.3,421.2 388.4,414.5 389.5,408.0 C390.6,401.5 391.3,396.3 392.5,391.0 C393.7,385.7 394.9,380.6 396.5,376.0 C398.1,371.4 399.5,367.1 402.0,363.4 C404.5,359.7 408.4,355.9 411.6,354.0 C414.8,352.1 418.4,351.2 421.0,351.7 C423.6,352.2 425.6,354.3 427.0,357.0 C428.4,359.7 429.1,364.3 429.5,368.0 C429.9,371.7 429.6,375.8 429.5,379.0 C429.4,382.2 428.9,385.7 428.8,387.0" fill="none" stroke="#0c0c0c" stroke-width="6.8" stroke-linecap="round"/>
<path d="M464.7,384.0 C464.9,381.3 464.9,372.5 466.0,368.0 C467.1,363.5 468.7,359.7 471.0,357.0 C473.3,354.3 476.7,351.9 480.0,351.7 C483.3,351.5 488.1,352.9 491.0,355.6 C493.9,358.3 495.8,364.1 497.5,368.0 C499.2,371.9 499.7,375.7 501.0,379.0 C502.3,382.3 504.3,384.8 505.5,388.0 C506.7,391.2 507.2,393.5 508.0,398.0 C508.8,402.5 509.3,408.8 510.0,415.0 C510.7,421.2 511.2,426.8 512.0,435.0 C512.8,443.2 514.5,459.2 515.0,464.0" fill="none" stroke="#0c0c0c" stroke-width="6.8" stroke-linecap="round"/>
<circle cx="381" cy="459" r="3.8" fill="#0c0c0c"/>
<defs><linearGradient id="wfade" x1="0" y1="0" x2="0" y2="1"><stop offset="0" stop-color="#fff" stop-opacity="0"/><stop offset="1" stop-color="#fff" stop-opacity=".85"/></linearGradient></defs>
<rect x="424" y="374" width="12" height="16" fill="url(#wfade)"/>
<!-- sprout -->
<path d="M541,179 Q556,157 592,161" fill="none" stroke="#0c0c0c" stroke-width="5.5" stroke-linecap="round"/>
<path transform="translate(592,161.5) rotate(42)" d="M0,0 C-8.5,-5 -12,-16 -12,-25 A12,12 0 0 1 12,-25 C12,-16 8.5,-5 0,0Z" fill="#8eecd2" stroke="#0c0c0c" stroke-width="7" stroke-linejoin="round"/>
<path transform="translate(591.5,162) rotate(144)" d="M0,0 C-9,-6 -12.5,-19 -12.5,-30 A12.5,12.5 0 0 1 12.5,-30 C12.5,-19 9,-6 0,0Z" fill="#8eecd2" stroke="#0c0c0c" stroke-width="7" stroke-linejoin="round"/>
<!-- hearts -->
<defs><linearGradient id="hl" x1="0" y1="0" x2="0" y2="1"><stop offset="0" stop-color="#fff"/><stop offset=".6" stop-color="#fff"/><stop offset="1" stop-color="#fff" stop-opacity=".3"/></linearGradient></defs>
<g fill="#f54545" stroke="#f3a27e" stroke-width="2.2" stroke-opacity=".55">
<path d="M321,137.5 C326,125 338,120 345,125 C352,131 352,148 348,158 C344,168 336,176 326,176 C314,176 298,167 294,155 C291,145 296,136 305,134 C312,133 318,135 321,137.5Z"/>
<path d="M377,138.5 C381,134 389,132.5 393,136 C397,140 396,149 391,155 C386,161 378,163 371,161.5 C364,160 359,154 360,147 C361,140 366,137 371,138 C374,138.5 376,139 377,138.5Z"/>
</g>
<g fill="url(#hl)">
<path d="M301.5,142 Q305,137 309,141.5 Q311,152 315.5,165.5 Q305,159 301.5,142Z"/>
<path d="M365,144 Q368.5,139.5 371.5,144 Q371.5,150 373,156 Q365.5,152 365,144Z"/>
</g>
<g fill="#fff"><circle cx="325" cy="164.5" r="2.9"/><circle cx="377.6" cy="154.9" r="2.6"/></g>
</svg>
<svg style="left:200px;top:80px;" width="566" height="437" viewBox="200 80 566 437">
<g fill="none" stroke="#fdfbf3" stroke-width="3.4" stroke-linecap="round" stroke-linejoin="round">
<path d="M547,400 L551,382 L557,394.5 L563,382 L565,400"/>
<path d="M567.5,382 L574,391 M580.5,381.5 L574,391 L571.5,400.5"/>
<path d="M584,400 L584,382 L595.5,399.5 L596,381.5"/>
<path d="M601,382 L601,400 M614,381 L614,400.5 M601,393 L614,389.5"/>
<path d="M547,426.5 L547.5,408.5 L559,426 L560,407.5"/>
<path d="M578,410 Q574,407.5 570,408.5 Q564.5,411 564.5,418 Q565,426 571,426 Q577,425.5 578,420.5 L578.5,418 L571.5,418.5"/>
<path d="M584,408.5 L584,422 Q584.5,426.5 589,425 L596,420.5 M596,407.5 L596,426.5"/>
<path d="M600.5,408.5 L607,417 M613.5,407.5 L607,417 L605.5,427"/>
<path d="M628.5,407.5 L618,408.5 L618,426 L629,425 M618,417 L626.5,416"/>
<path d="M632,427 L632,408.5 L644.5,426 L645,407.5"/>
<path d="M650,408.5 L650,427 M662,407.5 L662,427 M650,420 L662,416.5"/>
<path d="M666,408.5 L666,423 Q667,427 671.5,425.5 L680,419.5 M680,407.5 L680,427"/>
<path d="M696,407.5 L685.5,408.5 L685.5,426 L696.5,425 M685.5,417 L694,416"/>
<path d="M699.5,411.5 L703,407.5 L703,427"/>
<path d="M720,407.5 L708.5,408 L707.5,416 Q714,413.5 718.5,416 Q721,420 719,423.5 Q715,427.5 706.5,425.5"/>
<path d="M733,407.5 L723.5,421 L737,420 M734,410 L734,427"/>
<path d="M550,437 L549,453.5 M556,436 L555,453.5 M546.5,441.5 L559,441 M546.5,448 L559,447.5"/>
<path d="M563,435.5 L563,455 M574,435 L574,455 M563,446 L574,444"/>
<path d="M581,436 L581,454 M581,436 Q592,435 594,443 Q595,452 583,454"/>
<path d="M597,440 Q602,434.5 608,436.5 Q613,440 608,446 L597.5,454 L611,453"/>
<path d="M625,435.5 L615.5,447 L629,446 M625,438.5 L625,455"/>
<path d="M631,436.5 L642,435.5 L634.5,455"/>
</g>
</svg>
</body></html>
